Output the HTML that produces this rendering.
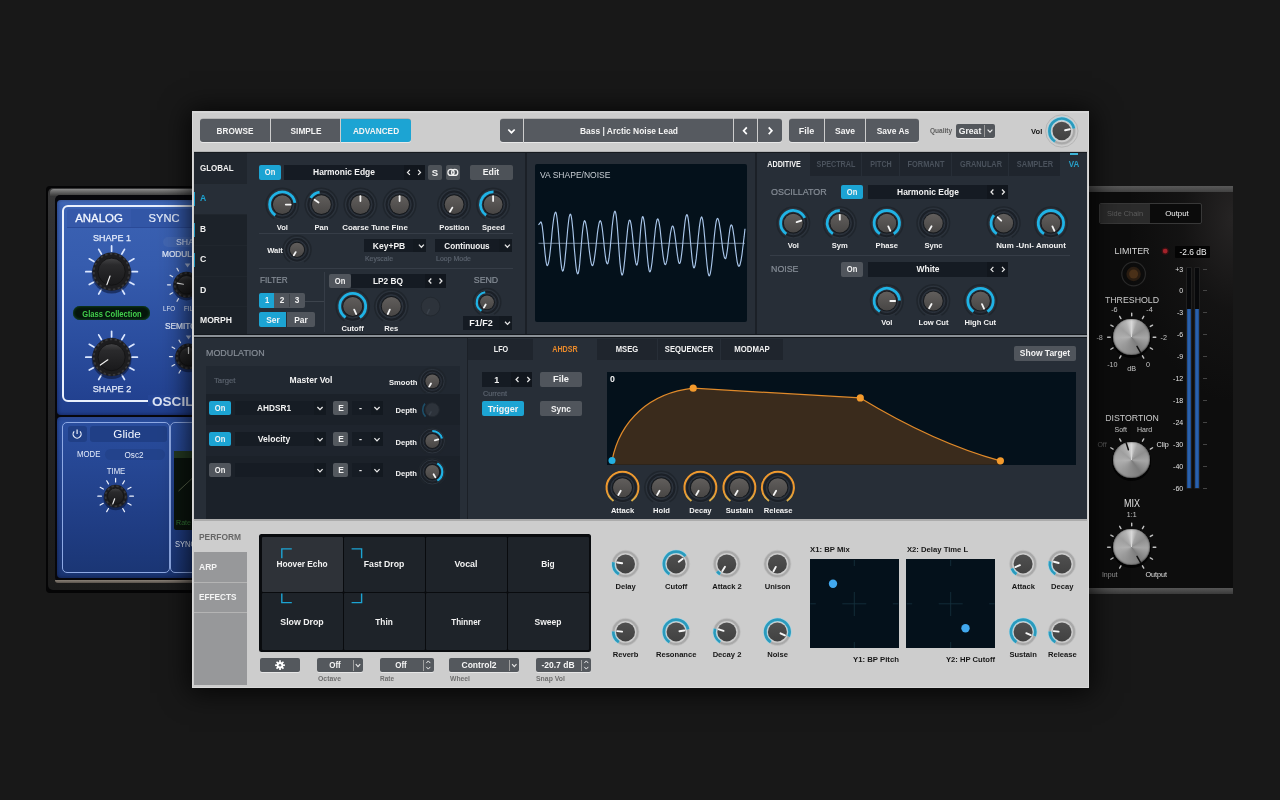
<!DOCTYPE html>
<html lang="en"><head><meta charset="utf-8"><title>Synth UI</title>
<style>
html,body{margin:0;padding:0;background:#181818;}
#app{position:relative;width:1280px;height:800px;overflow:hidden;background:#181818;font-family:"Liberation Sans",sans-serif;}
.b{position:absolute;box-sizing:border-box;}
.t{position:absolute;white-space:pre;line-height:1;display:block;}
div.tl{position:absolute;left:0;top:0;width:1280px;height:800px;will-change:transform;}
svg.ov{position:absolute;left:0;top:0;pointer-events:none;}
</style></head><body>
<div id="app">
<div class="b " style="left:45.5px;top:185.6px;width:152.0px;height:407.4px;background:#050506;border-radius:4px;"></div><div class="b " style="left:48.4px;top:188.2px;width:150.0px;height:401.6px;background:linear-gradient(180deg,#363637 0%,#313132 8%,#272728 45%,#1b1b1b 100%);border-radius:5px;"></div><div class="b " style="left:50.0px;top:188.8px;width:148.0px;height:7.0px;background:linear-gradient(180deg,#8a8a8a 0%,#707070 30%,#4c4c4c 75%,#3a3a3a 100%);border-radius:4px 0 0 0;"></div><div class="b " style="left:55.4px;top:195.4px;width:143.0px;height:387.0px;background:#07070b;border-radius:5px;"></div><div class="b " style="left:55.0px;top:580.4px;width:143.0px;height:2.6px;background:linear-gradient(180deg,#8a8178,#5a534c);border-radius:0 0 0 6px;"></div><div class="b " style="left:57.2px;top:200.0px;width:140.0px;height:214.8px;background:linear-gradient(180deg,#4a74c6 0%,#3b62b3 2.5%,#365cae 30%,#2b4e9f 65%,#203e8c 100%);border-radius:4px;box-shadow:inset 0 0 4px rgba(0,0,30,.5);"></div><div class="b " style="left:57.2px;top:417.0px;width:140.0px;height:161.2px;background:linear-gradient(180deg,#3a5cb0 0%,#2a4e9f 1.5%,#264794 30%,#1f3c82 70%,#1a3573 100%);border-radius:4px;box-shadow:inset 0 0 4px rgba(0,0,30,.5);"></div><div class="b " style="left:62.0px;top:204.8px;width:150.0px;height:197.6px;background:transparent;border-radius:6px;border:2px solid #eaf0fc;"></div><div class="b " style="left:148.0px;top:395.0px;width:50.0px;height:11.0px;background:#254596;"></div><div class="b " style="left:66.5px;top:208.6px;width:64.0px;height:18.0px;background:#3659aa;border-radius:3px 0 0 0;"></div><div class="b " style="left:131.2px;top:208.6px;width:66.0px;height:18.0px;background:#3256a6;"></div><div class="b " style="left:66.5px;top:226.6px;width:132.0px;height:0.8px;background:#2a4a98;"></div><div class="b " style="left:72.5px;top:306.2px;width:77.8px;height:13.8px;background:#05160c;border-radius:7px;box-shadow:inset 0 0 2.5px 0.5px #124a24;"></div><div class="b " style="left:163.0px;top:236.5px;width:40.0px;height:10.8px;background:#4266b2;border-radius:5.4px;"></div><div class="b " style="left:61.6px;top:421.6px;width:108.0px;height:151.4px;background:transparent;border-radius:5px;border:1.8px solid #8ea9e4;"></div><div class="b " style="left:170.2px;top:421.6px;width:60.0px;height:151.4px;background:transparent;border-radius:5px;border:1.8px solid #8ea9e4;"></div><div class="b " style="left:67.5px;top:425.8px;width:19.2px;height:16.6px;background:#203f86;border-radius:3px;"></div><div class="b " style="left:89.5px;top:425.8px;width:77.0px;height:16.6px;background:#203f86;border-radius:3px;"></div><div class="b " style="left:104.6px;top:449.0px;width:60.4px;height:11.0px;background:#23438c;border-radius:5.5px;"></div><div class="b " style="left:173.9px;top:451.4px;width:30.0px;height:78.4px;background:#0b150e;border-radius:2px;"></div><div class="b " style="left:173.9px;top:451.4px;width:30.0px;height:7.0px;background:#243a22;"></div><div class="b " style="left:1088.0px;top:186.0px;width:144.6px;height:408.0px;background:radial-gradient(ellipse 70% 45% at 100% 8%,rgba(38,36,36,1),rgba(24,23,23,.6) 50%,rgba(13,13,13,0) 100%),#0d0d0d;"></div><div class="b " style="left:1088.0px;top:186.4px;width:144.6px;height:5.4px;background:linear-gradient(180deg,#585858,#424242);"></div><div class="b " style="left:1088.0px;top:588.4px;width:144.6px;height:5.6px;background:linear-gradient(180deg,#565656,#3a3a3a);"></div><div class="b " style="left:1099.2px;top:202.5px;width:102.6px;height:21.6px;background:#0b0b0b;border-radius:2px;border:1px solid #383838;"></div><div class="b " style="left:1100.2px;top:203.5px;width:50.0px;height:19.6px;background:#2b2b2b;border-radius:1px 0 0 1px;"></div><div class="b " style="left:1174.8px;top:245.8px;width:35.2px;height:11.8px;background:#040404;border-radius:1px;"></div><div class="b " style="left:1112.4px;top:319.4px;width:38.6px;height:38.6px;background:#030303;border-radius:19.3px;"></div><div class="b " style="left:1113.4px;top:318.9px;width:36.6px;height:36.6px;background:conic-gradient(from 0deg,#d9d9d9 0%,#a4a4a4 6%,#8f8f8f 16%,#a6a6a6 26%,#7c7c7c 40%,#8a8a8a 50%,#9c9c9c 62%,#b2b2b2 74%,#a0a0a0 86%,#b4b4b4 94%,#d9d9d9 100%);border-radius:18.3px;box-shadow:inset 0 0 1.5px 0.5px rgba(0,0,0,.55), inset 0 1px 1px rgba(255,255,255,.35);"></div><div class="b " style="left:1112.4px;top:442.0px;width:38.6px;height:38.6px;background:#030303;border-radius:19.3px;"></div><div class="b " style="left:1113.4px;top:441.5px;width:36.6px;height:36.6px;background:conic-gradient(from 0deg,#d9d9d9 0%,#a4a4a4 6%,#8f8f8f 16%,#a6a6a6 26%,#7c7c7c 40%,#8a8a8a 50%,#9c9c9c 62%,#b2b2b2 74%,#a0a0a0 86%,#b4b4b4 94%,#d9d9d9 100%);border-radius:18.3px;box-shadow:inset 0 0 1.5px 0.5px rgba(0,0,0,.55), inset 0 1px 1px rgba(255,255,255,.35);"></div><div class="b " style="left:1112.4px;top:529.4px;width:38.6px;height:38.6px;background:#030303;border-radius:19.3px;"></div><div class="b " style="left:1113.4px;top:528.9px;width:36.6px;height:36.6px;background:conic-gradient(from 0deg,#d9d9d9 0%,#a4a4a4 6%,#8f8f8f 16%,#a6a6a6 26%,#7c7c7c 40%,#8a8a8a 50%,#9c9c9c 62%,#b2b2b2 74%,#a0a0a0 86%,#b4b4b4 94%,#d9d9d9 100%);border-radius:18.3px;box-shadow:inset 0 0 1.5px 0.5px rgba(0,0,0,.55), inset 0 1px 1px rgba(255,255,255,.35);"></div><div class="b " style="left:1203.4px;top:269.0px;width:3.6px;height:0.7px;background:#444;"></div><div class="b " style="left:1203.4px;top:290.3px;width:3.6px;height:0.7px;background:#444;"></div><div class="b " style="left:1203.4px;top:312.3px;width:3.6px;height:0.7px;background:#444;"></div><div class="b " style="left:1203.4px;top:334.2px;width:3.6px;height:0.7px;background:#444;"></div><div class="b " style="left:1203.4px;top:356.1px;width:3.6px;height:0.7px;background:#444;"></div><div class="b " style="left:1203.4px;top:378.1px;width:3.6px;height:0.7px;background:#444;"></div><div class="b " style="left:1203.4px;top:399.9px;width:3.6px;height:0.7px;background:#444;"></div><div class="b " style="left:1203.4px;top:421.9px;width:3.6px;height:0.7px;background:#444;"></div><div class="b " style="left:1203.4px;top:443.9px;width:3.6px;height:0.7px;background:#444;"></div><div class="b " style="left:1203.4px;top:465.9px;width:3.6px;height:0.7px;background:#444;"></div><div class="b " style="left:1203.4px;top:487.9px;width:3.6px;height:0.7px;background:#444;"></div><div class="b " style="left:1186.7px;top:268.4px;width:4.7px;height:220.0px;background:#08090b;box-shadow:0 0 0 0.6px #2a2a2a;"></div><div class="b " style="left:1186.7px;top:309.0px;width:4.7px;height:179.4px;background:linear-gradient(90deg,#1b4686,#2f6ab8 50%,#1b4686);"></div><div class="b " style="left:1194.7px;top:268.4px;width:4.7px;height:220.0px;background:#08090b;box-shadow:0 0 0 0.6px #2a2a2a;"></div><div class="b " style="left:1194.7px;top:309.0px;width:4.7px;height:179.4px;background:linear-gradient(90deg,#1b4686,#2f6ab8 50%,#1b4686);"></div>
<svg class="ov" width="1280" height="800" viewBox="0 0 1280 800"><defs>
<linearGradient id="kd" x1="0" y1="0" x2="0" y2="1"><stop offset="0" stop-color="#615e5c"/><stop offset="1" stop-color="#484645"/></linearGradient>
<linearGradient id="kl" x1="0" y1="0" x2="0" y2="1"><stop offset="0" stop-color="#505050"/><stop offset="1" stop-color="#414141"/></linearGradient>
<linearGradient id="kb" x1="0" y1="0" x2="0" y2="1"><stop offset="0" stop-color="#444446"/><stop offset="0.25" stop-color="#2a2a2c"/><stop offset="1" stop-color="#19191b"/></linearGradient>
<linearGradient id="ks" x1="0" y1="0" x2="1" y2="0"><stop offset="0" stop-color="#8c8c8c"/><stop offset="0.3" stop-color="#d8d8d8"/><stop offset="0.5" stop-color="#9a9a9a"/><stop offset="0.7" stop-color="#d0d0d0"/><stop offset="1" stop-color="#7a7a7a"/></linearGradient>
<linearGradient id="ksv" x1="0" y1="0" x2="0" y2="1"><stop offset="0" stop-color="#ffffff" stop-opacity="0.35"/><stop offset="0.5" stop-color="#ffffff" stop-opacity="0"/><stop offset="1" stop-color="#000000" stop-opacity="0.35"/></linearGradient>
<linearGradient id="blu" x1="0" y1="0" x2="0" y2="1"><stop offset="0" stop-color="#3560b8"/><stop offset="1" stop-color="#27489a"/></linearGradient>
<linearGradient id="mtr" x1="0" y1="0" x2="1" y2="0"><stop offset="0" stop-color="#1f4f93"/><stop offset="0.5" stop-color="#3f7fd6"/><stop offset="1" stop-color="#1f4f93"/></linearGradient>
<linearGradient id="org" gradientUnits="objectBoundingBox" x1="0" y1="0" x2="0" y2="1"><stop offset="0" stop-color="#f09a2e"/><stop offset="0.7" stop-color="#ec982f"/><stop offset="1" stop-color="#d8b04c"/></linearGradient>
</defs><line x1="101.40" y1="289.37" x2="98.70" y2="294.04" stroke="#dbe7ff" stroke-width="1.7" stroke-linecap="round"/><line x1="93.93" y1="281.90" x2="89.26" y2="284.60" stroke="#dbe7ff" stroke-width="1.7" stroke-linecap="round"/><line x1="91.20" y1="271.70" x2="85.80" y2="271.70" stroke="#dbe7ff" stroke-width="1.7" stroke-linecap="round"/><line x1="93.93" y1="261.50" x2="89.26" y2="258.80" stroke="#dbe7ff" stroke-width="1.7" stroke-linecap="round"/><line x1="101.40" y1="254.03" x2="98.70" y2="249.36" stroke="#dbe7ff" stroke-width="1.7" stroke-linecap="round"/><line x1="111.60" y1="251.30" x2="111.60" y2="245.90" stroke="#dbe7ff" stroke-width="1.7" stroke-linecap="round"/><line x1="121.80" y1="254.03" x2="124.50" y2="249.36" stroke="#dbe7ff" stroke-width="1.7" stroke-linecap="round"/><line x1="129.27" y1="261.50" x2="133.94" y2="258.80" stroke="#dbe7ff" stroke-width="1.7" stroke-linecap="round"/><line x1="132.00" y1="271.70" x2="137.40" y2="271.70" stroke="#dbe7ff" stroke-width="1.7" stroke-linecap="round"/><line x1="129.27" y1="281.90" x2="133.94" y2="284.60" stroke="#dbe7ff" stroke-width="1.7" stroke-linecap="round"/><line x1="121.80" y1="289.37" x2="124.50" y2="294.04" stroke="#dbe7ff" stroke-width="1.7" stroke-linecap="round"/><circle cx="111.6" cy="273.5" r="19.900000000000002" fill="#0a1330" opacity="0.55"/><circle cx="111.6" cy="271.7" r="19.1" fill="#1d1d1f"/><circle cx="111.6" cy="271.7" r="17.80" fill="none" stroke="#37373a" stroke-width="1.8" stroke-dasharray="2.4 2.4"/><circle cx="111.6" cy="271.7" r="13.56" fill="url(#kb)" stroke="#111113" stroke-width="0.8"/><line x1="110.03" y1="276.01" x2="106.90" y2="284.62" stroke="#f0f0f0" stroke-width="1.2" stroke-linecap="round"/><line x1="101.40" y1="374.87" x2="98.70" y2="379.54" stroke="#dbe7ff" stroke-width="1.7" stroke-linecap="round"/><line x1="93.93" y1="367.40" x2="89.26" y2="370.10" stroke="#dbe7ff" stroke-width="1.7" stroke-linecap="round"/><line x1="91.20" y1="357.20" x2="85.80" y2="357.20" stroke="#dbe7ff" stroke-width="1.7" stroke-linecap="round"/><line x1="93.93" y1="347.00" x2="89.26" y2="344.30" stroke="#dbe7ff" stroke-width="1.7" stroke-linecap="round"/><line x1="101.40" y1="339.53" x2="98.70" y2="334.86" stroke="#dbe7ff" stroke-width="1.7" stroke-linecap="round"/><line x1="111.60" y1="336.80" x2="111.60" y2="331.40" stroke="#dbe7ff" stroke-width="1.7" stroke-linecap="round"/><line x1="121.80" y1="339.53" x2="124.50" y2="334.86" stroke="#dbe7ff" stroke-width="1.7" stroke-linecap="round"/><line x1="129.27" y1="347.00" x2="133.94" y2="344.30" stroke="#dbe7ff" stroke-width="1.7" stroke-linecap="round"/><line x1="132.00" y1="357.20" x2="137.40" y2="357.20" stroke="#dbe7ff" stroke-width="1.7" stroke-linecap="round"/><line x1="129.27" y1="367.40" x2="133.94" y2="370.10" stroke="#dbe7ff" stroke-width="1.7" stroke-linecap="round"/><line x1="121.80" y1="374.87" x2="124.50" y2="379.54" stroke="#dbe7ff" stroke-width="1.7" stroke-linecap="round"/><circle cx="111.6" cy="359.0" r="19.900000000000002" fill="#0a1330" opacity="0.55"/><circle cx="111.6" cy="357.2" r="19.1" fill="#1d1d1f"/><circle cx="111.6" cy="357.2" r="17.80" fill="none" stroke="#37373a" stroke-width="1.8" stroke-dasharray="2.4 2.4"/><circle cx="111.6" cy="357.2" r="13.56" fill="url(#kb)" stroke="#111113" stroke-width="0.8"/><line x1="107.85" y1="359.83" x2="100.34" y2="365.09" stroke="#f0f0f0" stroke-width="1.2" stroke-linecap="round"/><path d="M184.8 263.6L190.4 263.6L187.6 267.6Z" fill="#a9b9dc"/><line x1="178.50" y1="298.66" x2="177.00" y2="301.25" stroke="#eef3ff" stroke-width="1.2" stroke-linecap="round"/><line x1="172.64" y1="292.80" x2="170.05" y2="294.30" stroke="#eef3ff" stroke-width="1.2" stroke-linecap="round"/><line x1="170.50" y1="284.80" x2="167.50" y2="284.80" stroke="#eef3ff" stroke-width="1.2" stroke-linecap="round"/><line x1="172.64" y1="276.80" x2="170.05" y2="275.30" stroke="#eef3ff" stroke-width="1.2" stroke-linecap="round"/><line x1="178.50" y1="270.94" x2="177.00" y2="268.35" stroke="#eef3ff" stroke-width="1.2" stroke-linecap="round"/><line x1="194.50" y1="270.94" x2="196.00" y2="268.35" stroke="#eef3ff" stroke-width="1.2" stroke-linecap="round"/><line x1="200.36" y1="276.80" x2="202.95" y2="275.30" stroke="#eef3ff" stroke-width="1.2" stroke-linecap="round"/><line x1="202.50" y1="284.80" x2="205.50" y2="284.80" stroke="#eef3ff" stroke-width="1.2" stroke-linecap="round"/><line x1="200.36" y1="292.80" x2="202.95" y2="294.30" stroke="#eef3ff" stroke-width="1.2" stroke-linecap="round"/><line x1="194.50" y1="298.66" x2="196.00" y2="301.25" stroke="#eef3ff" stroke-width="1.2" stroke-linecap="round"/><circle cx="186.5" cy="286.6" r="13.8" fill="#0a1330" opacity="0.55"/><circle cx="186.5" cy="284.8" r="13" fill="#1d1d1f"/><circle cx="186.5" cy="284.8" r="11.70" fill="none" stroke="#37373a" stroke-width="1.8" stroke-dasharray="2.4 2.4"/><circle cx="186.5" cy="284.8" r="9.23" fill="url(#kb)" stroke="#111113" stroke-width="0.8"/><line x1="183.43" y1="284.26" x2="177.28" y2="283.17" stroke="#f0f0f0" stroke-width="1.2" stroke-linecap="round"/><path d="M185.8 335.4L191.4 335.4L188.6 339.4Z" fill="#a9b9dc"/><line x1="180.50" y1="370.46" x2="179.00" y2="373.05" stroke="#eef3ff" stroke-width="1.2" stroke-linecap="round"/><line x1="174.64" y1="364.60" x2="172.05" y2="366.10" stroke="#eef3ff" stroke-width="1.2" stroke-linecap="round"/><line x1="172.50" y1="356.60" x2="169.50" y2="356.60" stroke="#eef3ff" stroke-width="1.2" stroke-linecap="round"/><line x1="174.64" y1="348.60" x2="172.05" y2="347.10" stroke="#eef3ff" stroke-width="1.2" stroke-linecap="round"/><line x1="180.50" y1="342.74" x2="179.00" y2="340.15" stroke="#eef3ff" stroke-width="1.2" stroke-linecap="round"/><line x1="196.50" y1="342.74" x2="198.00" y2="340.15" stroke="#eef3ff" stroke-width="1.2" stroke-linecap="round"/><line x1="202.36" y1="348.60" x2="204.95" y2="347.10" stroke="#eef3ff" stroke-width="1.2" stroke-linecap="round"/><line x1="204.50" y1="356.60" x2="207.50" y2="356.60" stroke="#eef3ff" stroke-width="1.2" stroke-linecap="round"/><line x1="202.36" y1="364.60" x2="204.95" y2="366.10" stroke="#eef3ff" stroke-width="1.2" stroke-linecap="round"/><line x1="196.50" y1="370.46" x2="198.00" y2="373.05" stroke="#eef3ff" stroke-width="1.2" stroke-linecap="round"/><circle cx="188.5" cy="358.40000000000003" r="13.8" fill="#0a1330" opacity="0.55"/><circle cx="188.5" cy="356.6" r="13" fill="#1d1d1f"/><circle cx="188.5" cy="356.6" r="11.70" fill="none" stroke="#37373a" stroke-width="1.8" stroke-dasharray="2.4 2.4"/><circle cx="188.5" cy="356.6" r="9.23" fill="url(#kb)" stroke="#111113" stroke-width="0.8"/><line x1="188.50" y1="353.48" x2="188.50" y2="347.24" stroke="#f0f0f0" stroke-width="1.2" stroke-linecap="round"/><path d="M74.2 431.3A4 4 0 1 0 80 431.3" fill="none" stroke="#eef3ff" stroke-width="1.2"/><line x1="77.1" y1="429.4" x2="77.1" y2="434" stroke="#eef3ff" stroke-width="1.2"/><line x1="108.50" y1="508.50" x2="106.70" y2="511.62" stroke="#eef3ff" stroke-width="1.2" stroke-linecap="round"/><line x1="103.30" y1="503.30" x2="100.18" y2="505.10" stroke="#eef3ff" stroke-width="1.2" stroke-linecap="round"/><line x1="101.40" y1="496.20" x2="97.80" y2="496.20" stroke="#eef3ff" stroke-width="1.2" stroke-linecap="round"/><line x1="103.30" y1="489.10" x2="100.18" y2="487.30" stroke="#eef3ff" stroke-width="1.2" stroke-linecap="round"/><line x1="108.50" y1="483.90" x2="106.70" y2="480.78" stroke="#eef3ff" stroke-width="1.2" stroke-linecap="round"/><line x1="115.60" y1="482.00" x2="115.60" y2="478.40" stroke="#eef3ff" stroke-width="1.2" stroke-linecap="round"/><line x1="122.70" y1="483.90" x2="124.50" y2="480.78" stroke="#eef3ff" stroke-width="1.2" stroke-linecap="round"/><line x1="127.90" y1="489.10" x2="131.02" y2="487.30" stroke="#eef3ff" stroke-width="1.2" stroke-linecap="round"/><line x1="129.80" y1="496.20" x2="133.40" y2="496.20" stroke="#eef3ff" stroke-width="1.2" stroke-linecap="round"/><line x1="127.90" y1="503.30" x2="131.02" y2="505.10" stroke="#eef3ff" stroke-width="1.2" stroke-linecap="round"/><line x1="122.70" y1="508.50" x2="124.50" y2="511.62" stroke="#eef3ff" stroke-width="1.2" stroke-linecap="round"/><circle cx="115.6" cy="498.0" r="12.200000000000001" fill="#0a1330" opacity="0.55"/><circle cx="115.6" cy="496.2" r="11.4" fill="#1d1d1f"/><circle cx="115.6" cy="496.2" r="10.10" fill="none" stroke="#37373a" stroke-width="1.8" stroke-dasharray="2.4 2.4"/><circle cx="115.6" cy="496.2" r="8.09" fill="url(#kb)" stroke="#111113" stroke-width="0.8"/><line x1="114.66" y1="498.77" x2="112.79" y2="503.91" stroke="#f0f0f0" stroke-width="1.2" stroke-linecap="round"/><path d="M178.5 491L192 478.5" stroke="#6d7a5a" stroke-width="0.8"/><circle cx="1165.2" cy="251.1" r="3.6" fill="#3a1012"/><circle cx="1165.2" cy="251.1" r="2.4" fill="#a3222a"/><circle cx="1133.6" cy="274" r="11.8" fill="#0c0c0c" stroke="#2a2a2a" stroke-width="1.2"/><circle cx="1133.6" cy="274" r="7.2" fill="#2a1d12"/><circle cx="1133.6" cy="274" r="4.5" fill="#4a3018"/><line x1="1120.95" y1="355.82" x2="1119.65" y2="358.07" stroke="#c4c4c4" stroke-width="1.4" stroke-linecap="round"/><line x1="1113.08" y1="347.95" x2="1110.83" y2="349.25" stroke="#c4c4c4" stroke-width="1.4" stroke-linecap="round"/><line x1="1110.20" y1="337.20" x2="1107.60" y2="337.20" stroke="#c4c4c4" stroke-width="1.4" stroke-linecap="round"/><line x1="1113.08" y1="326.45" x2="1110.83" y2="325.15" stroke="#c4c4c4" stroke-width="1.4" stroke-linecap="round"/><line x1="1120.95" y1="318.58" x2="1119.65" y2="316.33" stroke="#c4c4c4" stroke-width="1.4" stroke-linecap="round"/><line x1="1131.70" y1="315.70" x2="1131.70" y2="313.10" stroke="#c4c4c4" stroke-width="1.4" stroke-linecap="round"/><line x1="1142.45" y1="318.58" x2="1143.75" y2="316.33" stroke="#c4c4c4" stroke-width="1.4" stroke-linecap="round"/><line x1="1150.32" y1="326.45" x2="1152.57" y2="325.15" stroke="#c4c4c4" stroke-width="1.4" stroke-linecap="round"/><line x1="1153.20" y1="337.20" x2="1155.80" y2="337.20" stroke="#c4c4c4" stroke-width="1.4" stroke-linecap="round"/><line x1="1150.32" y1="347.95" x2="1152.57" y2="349.25" stroke="#c4c4c4" stroke-width="1.4" stroke-linecap="round"/><line x1="1142.45" y1="355.82" x2="1143.75" y2="358.07" stroke="#c4c4c4" stroke-width="1.4" stroke-linecap="round"/><line x1="1137.01" y1="346.39" x2="1140.67" y2="352.73" stroke="#101010" stroke-width="1.5" stroke-linecap="round"/><line x1="1113.08" y1="449.05" x2="1110.83" y2="447.75" stroke="#c4c4c4" stroke-width="1.4" stroke-linecap="round"/><line x1="1120.95" y1="441.18" x2="1119.65" y2="438.93" stroke="#c4c4c4" stroke-width="1.4" stroke-linecap="round"/><line x1="1142.45" y1="441.18" x2="1143.75" y2="438.93" stroke="#c4c4c4" stroke-width="1.4" stroke-linecap="round"/><line x1="1150.32" y1="449.05" x2="1152.57" y2="447.75" stroke="#c4c4c4" stroke-width="1.4" stroke-linecap="round"/><line x1="1128.42" y1="449.71" x2="1126.16" y2="442.74" stroke="#101010" stroke-width="1.5" stroke-linecap="round"/><line x1="1120.95" y1="565.82" x2="1119.65" y2="568.07" stroke="#c4c4c4" stroke-width="1.4" stroke-linecap="round"/><line x1="1113.08" y1="557.95" x2="1110.83" y2="559.25" stroke="#c4c4c4" stroke-width="1.4" stroke-linecap="round"/><line x1="1110.20" y1="547.20" x2="1107.60" y2="547.20" stroke="#c4c4c4" stroke-width="1.4" stroke-linecap="round"/><line x1="1113.08" y1="536.45" x2="1110.83" y2="535.15" stroke="#c4c4c4" stroke-width="1.4" stroke-linecap="round"/><line x1="1120.95" y1="528.58" x2="1119.65" y2="526.33" stroke="#c4c4c4" stroke-width="1.4" stroke-linecap="round"/><line x1="1131.70" y1="525.70" x2="1131.70" y2="523.10" stroke="#c4c4c4" stroke-width="1.4" stroke-linecap="round"/><line x1="1142.45" y1="528.58" x2="1143.75" y2="526.33" stroke="#c4c4c4" stroke-width="1.4" stroke-linecap="round"/><line x1="1150.32" y1="536.45" x2="1152.57" y2="535.15" stroke="#c4c4c4" stroke-width="1.4" stroke-linecap="round"/><line x1="1153.20" y1="547.20" x2="1155.80" y2="547.20" stroke="#c4c4c4" stroke-width="1.4" stroke-linecap="round"/><line x1="1150.32" y1="557.95" x2="1152.57" y2="559.25" stroke="#c4c4c4" stroke-width="1.4" stroke-linecap="round"/><line x1="1142.45" y1="565.82" x2="1143.75" y2="568.07" stroke="#c4c4c4" stroke-width="1.4" stroke-linecap="round"/><line x1="1137.01" y1="556.39" x2="1140.67" y2="562.73" stroke="#101010" stroke-width="1.5" stroke-linecap="round"/></svg>
<div class="tl"><span class="t" style="left:99.1px;top:212.58px;font-size:11.4px;color:#f2f6ff;transform:translateX(-50%) scaleX(1.004);transform-origin:50% 50%;-webkit-text-stroke:0.3px #f2f6ff;">ANALOG</span><span class="t" style="left:163.6px;top:212.58px;font-size:11.4px;color:#e6edfb;transform:translateX(-50%) scaleX(0.979);transform-origin:50% 50%;-webkit-text-stroke:0.2px #e6edfb;">SYNC</span><span class="t" style="left:112.0px;top:233.78px;font-size:9.3px;color:#e4ecfb;transform:translateX(-50%) scaleX(0.967);transform-origin:50% 50%;-webkit-text-stroke:0.25px #e4ecfb;">SHAPE 1</span><span class="t" style="left:112.0px;top:384.98px;font-size:9.3px;color:#e4ecfb;transform:translateX(-50%) scaleX(0.980);transform-origin:50% 50%;-webkit-text-stroke:0.25px #e4ecfb;">SHAPE 2</span><span class="t" style="left:151.5px;top:394.83px;font-size:13.2px;color:#dfe6f6;transform:scaleX(1.029);transform-origin:0 50%;font-weight:700;">OSCIL</span><span class="t" style="left:111.7px;top:309.72px;font-size:8.3px;color:#42d04c;transform:translateX(-50%) scaleX(0.913);transform-origin:50% 50%;font-weight:700;">Glass Collection</span><span class="t" style="left:175.8px;top:237.78px;font-size:8.6px;color:#d9e3f7;transform:scaleX(1.018);transform-origin:0 50%;">SHAPE</span><span class="t" style="left:162.4px;top:250.41px;font-size:8.4px;color:#e4ecfb;transform:scaleX(0.989);transform-origin:0 50%;-webkit-text-stroke:0.2px #e4ecfb;">MODULATION</span><span class="t" style="left:163.0px;top:304.68px;font-size:7.2px;color:#e4ecfb;transform:scaleX(0.857);transform-origin:0 50%;">LFO</span><span class="t" style="left:184.0px;top:304.68px;font-size:7.2px;color:#e4ecfb;transform:scaleX(0.865);transform-origin:0 50%;">FIL</span><span class="t" style="left:165.4px;top:322.41px;font-size:8.4px;color:#e4ecfb;transform:scaleX(0.993);transform-origin:0 50%;-webkit-text-stroke:0.2px #e4ecfb;">SEMITONES</span><span class="t" style="left:126.6px;top:428.78px;font-size:11.4px;color:#f2f6ff;transform:translateX(-50%) scaleX(1.033);transform-origin:50% 50%;">Glide</span><span class="t" style="left:77.1px;top:450.41px;font-size:8.4px;color:#e4ecfb;transform:scaleX(0.929);transform-origin:0 50%;">MODE</span><span class="t" style="left:134.3px;top:450.51px;font-size:8.4px;color:#e4ecfb;transform:translateX(-50%) scaleX(0.969);transform-origin:50% 50%;">Osc2</span><span class="t" style="left:116.2px;top:467.28px;font-size:8.6px;color:#e4ecfb;transform:translateX(-50%) scaleX(0.901);transform-origin:50% 50%;">TIME</span><span class="t" style="left:175.5px;top:519.36px;font-size:8px;color:#347a38;transform:scaleX(0.888);transform-origin:0 50%;">Rate</span><span class="t" style="left:174.7px;top:540.21px;font-size:8.4px;color:#e4ecfb;transform:scaleX(0.900);transform-origin:0 50%;">SYNC</span><span class="t" style="left:1125.4px;top:209.62px;font-size:7.6px;color:#5d5d5d;transform:translateX(-50%) scaleX(0.968);transform-origin:50% 50%;">Side Chain</span><span class="t" style="left:1176.6px;top:209.62px;font-size:7.6px;color:#f4f4f4;transform:translateX(-50%) scaleX(1.030);transform-origin:50% 50%;">Output</span><span class="t" style="left:1131.7px;top:246.88px;font-size:9.3px;color:#d8d8d8;transform:translateX(-50%) scaleX(0.951);transform-origin:50% 50%;">LIMITER</span><span class="t" style="left:1192.6px;top:247.58px;font-size:8.6px;color:#f0f0f0;transform:translateX(-50%) scaleX(0.974);transform-origin:50% 50%;">-2.6 dB</span><span class="t" style="left:1131.7px;top:295.78px;font-size:9.3px;color:#cfcfcf;transform:translateX(-50%) scaleX(0.945);transform-origin:50% 50%;">THRESHOLD</span><span class="t" style="left:1114.4px;top:306.28px;font-size:7.2px;color:#c8c8c8;transform:translateX(-50%) scaleX(1.000);transform-origin:50% 50%;">-6</span><span class="t" style="left:1149.5px;top:306.28px;font-size:7.2px;color:#c8c8c8;transform:translateX(-50%) scaleX(1.000);transform-origin:50% 50%;">-4</span><span class="t" style="left:1099.6px;top:333.78px;font-size:7.2px;color:#c8c8c8;transform:translateX(-50%) scaleX(1.000);transform-origin:50% 50%;">-8</span><span class="t" style="left:1163.8px;top:333.78px;font-size:7.2px;color:#c8c8c8;transform:translateX(-50%) scaleX(1.000);transform-origin:50% 50%;">-2</span><span class="t" style="left:1112.4px;top:361.28px;font-size:7.2px;color:#c8c8c8;transform:translateX(-50%) scaleX(1.000);transform-origin:50% 50%;">-10</span><span class="t" style="left:1148.0px;top:361.28px;font-size:7.2px;color:#c8c8c8;transform:translateX(-50%) scaleX(1.000);transform-origin:50% 50%;">0</span><span class="t" style="left:1131.7px;top:365.08px;font-size:7.2px;color:#c8c8c8;transform:translateX(-50%) scaleX(1.000);transform-origin:50% 50%;">dB</span><span class="t" style="left:1131.7px;top:413.68px;font-size:9.3px;color:#cfcfcf;transform:translateX(-50%) scaleX(0.940);transform-origin:50% 50%;">DISTORTION</span><span class="t" style="left:1120.7px;top:425.71px;font-size:7px;color:#c8c8c8;transform:translateX(-50%) scaleX(1.000);transform-origin:50% 50%;">Soft</span><span class="t" style="left:1144.6px;top:425.71px;font-size:7px;color:#c8c8c8;transform:translateX(-50%) scaleX(1.000);transform-origin:50% 50%;">Hard</span><span class="t" style="left:1102.0px;top:441.31px;font-size:7px;color:#5a5a5a;transform:translateX(-50%) scaleX(1.000);transform-origin:50% 50%;">Off</span><span class="t" style="left:1162.6px;top:441.28px;font-size:7.2px;color:#e8e8e8;transform:translateX(-50%) scaleX(1.000);transform-origin:50% 50%;">Clip</span><span class="t" style="left:1131.7px;top:499.18px;font-size:10px;color:#e0e0e0;transform:translateX(-50%) scaleX(0.900);transform-origin:50% 50%;">MIX</span><span class="t" style="left:1131.7px;top:510.91px;font-size:7px;color:#c8c8c8;transform:translateX(-50%) scaleX(1.000);transform-origin:50% 50%;">1:1</span><span class="t" style="left:1109.7px;top:570.71px;font-size:7px;color:#9a9a9a;transform:translateX(-50%) scaleX(1.000);transform-origin:50% 50%;">Input</span><span class="t" style="left:1156.2px;top:570.68px;font-size:7.2px;color:#e0e0e0;transform:translateX(-50%) scaleX(1.000);transform-origin:50% 50%;">Output</span><span class="t" style="left:1183.2px;top:265.81px;font-size:7px;color:#e0e0e0;transform:translateX(-100%) scaleX(1.000);transform-origin:100% 50%;">+3</span><span class="t" style="left:1183.2px;top:287.11px;font-size:7px;color:#e0e0e0;transform:translateX(-100%) scaleX(1.000);transform-origin:100% 50%;">0</span><span class="t" style="left:1183.2px;top:309.11px;font-size:7px;color:#e0e0e0;transform:translateX(-100%) scaleX(1.000);transform-origin:100% 50%;">-3</span><span class="t" style="left:1183.2px;top:331.01px;font-size:7px;color:#e0e0e0;transform:translateX(-100%) scaleX(1.000);transform-origin:100% 50%;">-6</span><span class="t" style="left:1183.2px;top:352.91px;font-size:7px;color:#e0e0e0;transform:translateX(-100%) scaleX(1.000);transform-origin:100% 50%;">-9</span><span class="t" style="left:1183.2px;top:374.91px;font-size:7px;color:#e0e0e0;transform:translateX(-100%) scaleX(1.000);transform-origin:100% 50%;">-12</span><span class="t" style="left:1183.2px;top:396.71px;font-size:7px;color:#e0e0e0;transform:translateX(-100%) scaleX(1.000);transform-origin:100% 50%;">-18</span><span class="t" style="left:1183.2px;top:418.71px;font-size:7px;color:#e0e0e0;transform:translateX(-100%) scaleX(1.000);transform-origin:100% 50%;">-24</span><span class="t" style="left:1183.2px;top:440.71px;font-size:7px;color:#e0e0e0;transform:translateX(-100%) scaleX(1.000);transform-origin:100% 50%;">-30</span><span class="t" style="left:1183.2px;top:462.71px;font-size:7px;color:#e0e0e0;transform:translateX(-100%) scaleX(1.000);transform-origin:100% 50%;">-40</span><span class="t" style="left:1183.2px;top:484.71px;font-size:7px;color:#e0e0e0;transform:translateX(-100%) scaleX(1.000);transform-origin:100% 50%;">-60</span></div>
<div class="b " style="left:192.0px;top:111.0px;width:897.0px;height:577.0px;background:#cdcdcd;border:1.6px solid #d9d9d9;border-top:none;box-shadow:0 2px 26px 3px rgba(0,0,0,.78);"></div><div class="b " style="left:192.0px;top:111.0px;width:897.0px;height:1.8px;background:#d6d6d6;"></div><div class="b " style="left:200.0px;top:119.0px;width:70.0px;height:23.0px;background:#565a60;border-radius:3px 0px 0px 3px;box-shadow:0 1px 0 rgba(255,255,255,.55),0 -0.5px 0 rgba(0,0,0,.25);"></div><div class="b " style="left:271.0px;top:119.0px;width:69.0px;height:23.0px;background:#565a60;border-radius:0px 0px 0px 0px;box-shadow:0 1px 0 rgba(255,255,255,.55),0 -0.5px 0 rgba(0,0,0,.25);"></div><div class="b " style="left:340.5px;top:119.0px;width:70.0px;height:23.0px;background:#1ca4d3;border-radius:0px 3px 3px 0px;box-shadow:0 1px 0 rgba(255,255,255,.55),0 -0.5px 0 rgba(0,0,0,.25);"></div><div class="b " style="left:500.0px;top:119.0px;width:22.5px;height:23.0px;background:#565a60;border-radius:3px 0px 0px 3px;box-shadow:0 1px 0 rgba(255,255,255,.55),0 -0.5px 0 rgba(0,0,0,.25);"></div><div class="b " style="left:524.0px;top:119.0px;width:209.0px;height:23.0px;background:#565a60;border-radius:0px 0px 0px 0px;box-shadow:0 1px 0 rgba(255,255,255,.55),0 -0.5px 0 rgba(0,0,0,.25);"></div><div class="b " style="left:734.0px;top:119.0px;width:23.3px;height:23.0px;background:#565a60;border-radius:0px 0px 0px 0px;box-shadow:0 1px 0 rgba(255,255,255,.55),0 -0.5px 0 rgba(0,0,0,.25);"></div><div class="b " style="left:758.0px;top:119.0px;width:23.5px;height:23.0px;background:#565a60;border-radius:0px 3px 3px 0px;box-shadow:0 1px 0 rgba(255,255,255,.55),0 -0.5px 0 rgba(0,0,0,.25);"></div><div class="b " style="left:789.0px;top:119.0px;width:34.8px;height:23.0px;background:#565a60;border-radius:3px 0px 0px 3px;box-shadow:0 1px 0 rgba(255,255,255,.55),0 -0.5px 0 rgba(0,0,0,.25);"></div><div class="b " style="left:824.6px;top:119.0px;width:40.6px;height:23.0px;background:#565a60;border-radius:0px 0px 0px 0px;box-shadow:0 1px 0 rgba(255,255,255,.55),0 -0.5px 0 rgba(0,0,0,.25);"></div><div class="b " style="left:866.0px;top:119.0px;width:53.0px;height:23.0px;background:#565a60;border-radius:0px 3px 3px 0px;box-shadow:0 1px 0 rgba(255,255,255,.55),0 -0.5px 0 rgba(0,0,0,.25);"></div><div class="b " style="left:956.0px;top:123.6px;width:39.0px;height:14.6px;background:#53575c;border-radius:2px;box-shadow:0 1px 0 rgba(255,255,255,.5);"></div><div class="b " style="left:984.0px;top:125.2px;width:0.8px;height:11.4px;background:#9a9a9a;"></div><div class="b " style="left:193.6px;top:151.8px;width:893.4px;height:182.8px;background:#272e37;"></div><div class="b " style="left:193.6px;top:151.6px;width:893.4px;height:1.3px;background:#171b20;"></div><div class="b " style="left:193.6px;top:150.8px;width:893.4px;height:0.9px;background:#b4b5b6;"></div><div class="b " style="left:193.6px;top:152.9px;width:53.6px;height:181.6px;background:#1c2229;"></div><div class="b " style="left:193.6px;top:152.9px;width:53.6px;height:30.0px;background:#20262e;"></div><div class="b " style="left:193.6px;top:183.0px;width:53.6px;height:31.3px;background:#272e37;"></div><div class="b " style="left:193.6px;top:183.0px;width:53.6px;height:0.8px;background:#20262d;"></div><div class="b " style="left:193.6px;top:214.3px;width:53.6px;height:0.8px;background:#20262d;"></div><div class="b " style="left:193.6px;top:245.0px;width:53.6px;height:0.8px;background:#20262d;"></div><div class="b " style="left:193.6px;top:275.6px;width:53.6px;height:0.8px;background:#20262d;"></div><div class="b " style="left:193.6px;top:306.0px;width:53.6px;height:0.8px;background:#20262d;"></div><div class="b " style="left:193.8px;top:192.0px;width:1.6px;height:14.0px;background:#1ca4d3;"></div><div class="b " style="left:193.8px;top:222.5px;width:1.6px;height:14.0px;background:#1d93bd;"></div><div class="b " style="left:193.8px;top:253.0px;width:1.6px;height:14.0px;background:#1d93bd;"></div><div class="b " style="left:525.0px;top:152.6px;width:1.6px;height:182.0px;background:#1b2027;"></div><div class="b " style="left:755.0px;top:152.6px;width:2.2px;height:182.0px;background:#1b2027;"></div><div class="b " style="left:259.0px;top:164.6px;width:22.3px;height:15.2px;background:#1ca4d3;border-radius:2px 2px 2px 2px;"></div><div class="b " style="left:283.5px;top:165.0px;width:141.0px;height:14.6px;background:#151b23;"></div><div class="b " style="left:403.5px;top:165.0px;width:21.0px;height:14.6px;background:#11161d;"></div><div class="b " style="left:428.0px;top:165.0px;width:14.0px;height:14.6px;background:#4d5258;border-radius:2px;"></div><div class="b " style="left:445.5px;top:165.0px;width:14.6px;height:14.6px;background:#4d5258;border-radius:2px;"></div><div class="b " style="left:470.0px;top:165.0px;width:42.6px;height:14.6px;background:#4d5258;border-radius:2px;"></div><div class="b " style="left:259.0px;top:232.7px;width:253.5px;height:0.8px;background:#363d47;"></div><div class="b " style="left:364.3px;top:239.2px;width:62.0px;height:13.2px;background:#151b23;"></div><div class="b " style="left:413.3px;top:239.2px;width:13.0px;height:13.2px;background:#131920;"></div><div class="b " style="left:435.0px;top:239.2px;width:77.3px;height:13.2px;background:#151b23;"></div><div class="b " style="left:499.3px;top:239.2px;width:13.0px;height:13.2px;background:#131920;"></div><div class="b " style="left:259.0px;top:268.0px;width:253.5px;height:0.8px;background:#363d47;"></div><div class="b " style="left:258.9px;top:292.9px;width:15.3px;height:15.1px;background:#1ca4d3;border-radius:2px 0px 0px 2px;"></div><div class="b " style="left:274.2px;top:292.9px;width:15.2px;height:15.1px;background:#50555c;border-radius:0px 0px 0px 0px;"></div><div class="b " style="left:289.4px;top:292.9px;width:15.8px;height:15.1px;background:#50555c;border-radius:0px 2px 2px 0px;"></div><div class="b " style="left:289.3px;top:293.5px;width:0.7px;height:13.9px;background:#3e4349;"></div><div class="b " style="left:305.0px;top:300.6px;width:19.5px;height:0.8px;background:#3d444d;"></div><div class="b " style="left:258.9px;top:312.3px;width:27.6px;height:15.1px;background:#1ca4d3;border-radius:2px 0px 0px 2px;"></div><div class="b " style="left:286.5px;top:312.3px;width:28.1px;height:15.1px;background:#50555c;border-radius:0px 2px 2px 0px;"></div><div class="b " style="left:324.2px;top:271.5px;width:0.8px;height:60.0px;background:#363d47;"></div><div class="b " style="left:329.3px;top:273.8px;width:21.7px;height:14.4px;background:#50555c;border-radius:2px 2px 2px 2px;"></div><div class="b " style="left:351.4px;top:273.8px;width:94.0px;height:14.4px;background:#151b23;"></div><div class="b " style="left:424.5px;top:273.8px;width:21.0px;height:14.4px;background:#11161d;"></div><div class="b " style="left:463.4px;top:316.4px;width:49.0px;height:13.2px;background:#151b23;"></div><div class="b " style="left:499.4px;top:316.4px;width:13.0px;height:13.2px;background:#131920;"></div><div class="b " style="left:535.0px;top:164.3px;width:212.3px;height:158.0px;background:#04111b;border-radius:2px;"></div><div class="b " style="left:809.8px;top:152.9px;width:51.2px;height:22.8px;background:#1f252d;"></div><div class="b " style="left:862.0px;top:152.9px;width:36.8px;height:22.8px;background:#1f252d;"></div><div class="b " style="left:899.8px;top:152.9px;width:51.5px;height:22.8px;background:#1f252d;"></div><div class="b " style="left:952.3px;top:152.9px;width:55.5px;height:22.8px;background:#1f252d;"></div><div class="b " style="left:1008.8px;top:152.9px;width:51.2px;height:22.8px;background:#1f252d;"></div><div class="b " style="left:1070.4px;top:153.0px;width:7.8px;height:1.8px;background:#3db4d8;"></div><div class="b " style="left:840.8px;top:184.6px;width:22.2px;height:14.6px;background:#1ca4d3;border-radius:2px 2px 2px 2px;"></div><div class="b " style="left:867.7px;top:184.6px;width:140.0px;height:14.6px;background:#151b23;"></div><div class="b " style="left:986.5px;top:184.6px;width:21.2px;height:14.6px;background:#11161d;"></div><div class="b " style="left:770.0px;top:255.0px;width:300.0px;height:0.8px;background:#363d47;"></div><div class="b " style="left:840.8px;top:262.2px;width:22.2px;height:14.4px;background:#50555c;border-radius:2px 2px 2px 2px;"></div><div class="b " style="left:867.7px;top:262.2px;width:140.0px;height:14.4px;background:#151b23;"></div><div class="b " style="left:986.5px;top:262.2px;width:21.2px;height:14.4px;background:#11161d;"></div><div class="b " style="left:193.6px;top:334.2px;width:893.4px;height:4.0px;background:#14181d;"></div><div class="b " style="left:193.6px;top:335.2px;width:893.4px;height:1.5px;background:#8b9197;"></div><div class="b " style="left:193.6px;top:338.0px;width:893.4px;height:181.0px;background:#272e37;"></div><div class="b " style="left:466.8px;top:338.0px;width:1.6px;height:181.0px;background:#1b2027;"></div><div class="b " style="left:206.2px;top:366.0px;width:253.4px;height:153.0px;background:#1b2129;"></div><div class="b " style="left:206.2px;top:366.0px;width:253.4px;height:28.0px;background:#212831;"></div><div class="b " style="left:206.2px;top:425.0px;width:253.4px;height:31.0px;background:#1e242d;"></div><div class="b " style="left:209.0px;top:400.7px;width:22.0px;height:14.6px;background:#1ca4d3;border-radius:2px 2px 2px 2px;"></div><div class="b " style="left:234.7px;top:400.7px;width:91.0px;height:14.6px;background:#161c24;"></div><div class="b " style="left:313.5px;top:400.7px;width:12.2px;height:14.6px;background:#131920;"></div><div class="b " style="left:333.2px;top:400.7px;width:14.8px;height:14.6px;background:#54595f;border-radius:2px;"></div><div class="b " style="left:351.5px;top:400.7px;width:31.0px;height:14.6px;background:#161c24;"></div><div class="b " style="left:370.6px;top:400.7px;width:12.0px;height:14.6px;background:#131920;"></div><div class="b " style="left:209.0px;top:431.9px;width:22.0px;height:14.6px;background:#1ca4d3;border-radius:2px 2px 2px 2px;"></div><div class="b " style="left:234.7px;top:431.9px;width:91.0px;height:14.6px;background:#161c24;"></div><div class="b " style="left:313.5px;top:431.9px;width:12.2px;height:14.6px;background:#131920;"></div><div class="b " style="left:333.2px;top:431.9px;width:14.8px;height:14.6px;background:#54595f;border-radius:2px;"></div><div class="b " style="left:351.5px;top:431.9px;width:31.0px;height:14.6px;background:#161c24;"></div><div class="b " style="left:370.6px;top:431.9px;width:12.0px;height:14.6px;background:#131920;"></div><div class="b " style="left:209.0px;top:462.9px;width:22.0px;height:14.6px;background:#50555c;border-radius:2px 2px 2px 2px;"></div><div class="b " style="left:234.7px;top:462.9px;width:91.0px;height:14.6px;background:#161c24;"></div><div class="b " style="left:313.5px;top:462.9px;width:12.2px;height:14.6px;background:#131920;"></div><div class="b " style="left:333.2px;top:462.9px;width:14.8px;height:14.6px;background:#54595f;border-radius:2px;"></div><div class="b " style="left:351.5px;top:462.9px;width:31.0px;height:14.6px;background:#161c24;"></div><div class="b " style="left:370.6px;top:462.9px;width:12.0px;height:14.6px;background:#131920;"></div><div class="b " style="left:468.4px;top:338.6px;width:64.6px;height:21.3px;background:#1f252d;"></div><div class="b " style="left:597.0px;top:338.6px;width:59.6px;height:21.3px;background:#1f252d;"></div><div class="b " style="left:657.8px;top:338.6px;width:62.2px;height:21.3px;background:#1f252d;"></div><div class="b " style="left:721.2px;top:338.6px;width:62.3px;height:21.3px;background:#1f252d;"></div><div class="b " style="left:482.0px;top:372.2px;width:50.3px;height:14.6px;background:#151b23;"></div><div class="b " style="left:511.0px;top:372.2px;width:21.3px;height:14.6px;background:#11161d;"></div><div class="b " style="left:540.2px;top:372.2px;width:42.0px;height:14.6px;background:#50555c;border-radius:2px;"></div><div class="b " style="left:482.0px;top:401.4px;width:42.4px;height:14.6px;background:#1ca4d3;border-radius:2px;"></div><div class="b " style="left:540.2px;top:401.4px;width:42.0px;height:14.6px;background:#50555c;border-radius:2px;"></div><div class="b " style="left:1013.7px;top:346.2px;width:62.2px;height:14.4px;background:#50555c;border-radius:2px;"></div><div class="b " style="left:606.9px;top:372.3px;width:469.0px;height:92.4px;background:#04111b;"></div><div class="b " style="left:193.6px;top:519.0px;width:893.4px;height:1.7px;background:#acacac;"></div><div class="b " style="left:193.8px;top:552.0px;width:53.4px;height:133.4px;background:#97989a;"></div><div class="b " style="left:193.8px;top:582.0px;width:53.4px;height:0.8px;background:#b4b4b4;"></div><div class="b " style="left:193.8px;top:612.0px;width:53.4px;height:0.8px;background:#b4b4b4;"></div><div class="b " style="left:259.2px;top:534.2px;width:332.2px;height:117.6px;background:#090b0e;border-radius:2.5px;"></div><div class="b " style="left:262.0px;top:537.0px;width:81.2px;height:54.6px;background:#2e3238;border-radius:1px;"></div><div class="b " style="left:344.4px;top:537.0px;width:80.8px;height:54.6px;background:#1e2329;border-radius:1px;"></div><div class="b " style="left:426.4px;top:537.0px;width:80.4px;height:54.6px;background:#1e2329;border-radius:1px;"></div><div class="b " style="left:508.0px;top:537.0px;width:81.0px;height:54.6px;background:#1e2329;border-radius:1px;"></div><div class="b " style="left:262.0px;top:593.2px;width:81.2px;height:56.4px;background:#1e2329;border-radius:1px;"></div><div class="b " style="left:344.4px;top:593.2px;width:80.8px;height:56.4px;background:#1e2329;border-radius:1px;"></div><div class="b " style="left:426.4px;top:593.2px;width:80.4px;height:56.4px;background:#1e2329;border-radius:1px;"></div><div class="b " style="left:508.0px;top:593.2px;width:81.0px;height:56.4px;background:#1e2329;border-radius:1px;"></div><div class="b " style="left:259.8px;top:658.0px;width:40.6px;height:14.2px;background:#54585d;border-radius:2px;box-shadow:0 1px 0 rgba(255,255,255,.5);"></div><div class="b " style="left:317.2px;top:658.0px;width:46.2px;height:14.2px;background:#54585d;border-radius:2px;box-shadow:0 1px 0 rgba(255,255,255,.5);"></div><div class="b " style="left:352.6px;top:659.6px;width:0.8px;height:11.0px;background:#a0a0a0;"></div><div class="b " style="left:379.6px;top:658.0px;width:54.2px;height:14.2px;background:#54585d;border-radius:2px;box-shadow:0 1px 0 rgba(255,255,255,.5);"></div><div class="b " style="left:422.6px;top:659.6px;width:0.8px;height:11.0px;background:#a0a0a0;"></div><div class="b " style="left:449.4px;top:658.0px;width:70.0px;height:14.2px;background:#54585d;border-radius:2px;box-shadow:0 1px 0 rgba(255,255,255,.5);"></div><div class="b " style="left:509.0px;top:659.6px;width:0.8px;height:11.0px;background:#a0a0a0;"></div><div class="b " style="left:535.5px;top:658.0px;width:55.7px;height:14.2px;background:#54585d;border-radius:2px;box-shadow:0 1px 0 rgba(255,255,255,.5);"></div><div class="b " style="left:581.0px;top:659.6px;width:0.8px;height:11.0px;background:#a0a0a0;"></div><div class="b " style="left:809.8px;top:559.4px;width:88.9px;height:88.8px;background:#04111b;"></div><div class="b " style="left:906.2px;top:559.4px;width:89.0px;height:88.8px;background:#04111b;"></div>
<svg class="ov" width="1280" height="800" viewBox="0 0 1280 800"><path d="M508.30 129.50L511.50 132.70L514.70 129.50" fill="none" stroke="#ffffff" stroke-width="1.7"/><path d="M746.80 127.40L743.60 130.80L746.80 134.20" fill="none" stroke="#fff" stroke-width="1.7"/><path d="M768.70 127.40L771.90 130.80L768.70 134.20" fill="none" stroke="#fff" stroke-width="1.7"/><path d="M987.60 129.60L990.00 132.20L992.40 129.60" fill="none" stroke="#f0f0f0" stroke-width="1.1"/><circle cx="1061.8" cy="131" r="16.2" fill="none" stroke="#b2b2b2" stroke-width="0.9"/><circle cx="1061.8" cy="131" r="12.4" fill="none" stroke="#a9a9a9" stroke-width="2.5"/><circle cx="1061.8" cy="131" r="13.9" fill="none" stroke="#c0c0c0" stroke-width="0.7"/><path d="M1055.05 141.40A12.4 12.4 0 1 1 1073.93 128.42" fill="none" stroke="#9fd9ec" stroke-width="3.8"/><path d="M1055.05 141.40A12.4 12.4 0 1 1 1073.93 128.42" fill="none" stroke="#2a9abc" stroke-width="2.7"/><circle cx="1061.8" cy="131" r="9.3" fill="url(#kl)"/><line x1="1065.07" y1="130.30" x2="1069.81" y2="129.30" stroke="#f6f6f6" stroke-width="1.9" stroke-linecap="round"/><path d="M409.90 169.90L407.50 172.40L409.90 174.90" fill="none" stroke="#e8e8e8" stroke-width="1.25"/><path d="M418.10 169.90L420.50 172.40L418.10 174.90" fill="none" stroke="#e8e8e8" stroke-width="1.25"/><circle cx="451" cy="172.4" r="3.1" fill="none" stroke="#f0f0f0" stroke-width="1.25"/><circle cx="454.7" cy="172.4" r="3.1" fill="none" stroke="#f0f0f0" stroke-width="1.25"/><path d="M274.15 218.72A16.3 16.3 0 1 1 290.45 218.72" fill="none" stroke="#1f252c" stroke-width="1.4"/><circle cx="282.3" cy="204.6" r="14.7" fill="none" stroke="#2e353e" stroke-width="1"/><circle cx="282.3" cy="204.6" r="12.7" fill="none" stroke="#1b2027" stroke-width="2.6"/><circle cx="282.3" cy="204.6" r="11.6" fill="none" stroke="#2f363f" stroke-width="0.9"/><path d="M275.38 215.25A12.7 12.7 0 1 1 294.88 202.83" fill="none" stroke="#20b3e5" stroke-width="2.8"/><circle cx="282.3" cy="204.6" r="10.299999999999999" fill="#14171b"/><circle cx="282.3" cy="204.6" r="9.399999999999999" fill="url(#kd)"/><line x1="285.79" y1="204.60" x2="290.64" y2="204.60" stroke="#f4f4f4" stroke-width="1.8" stroke-linecap="round"/><path d="M313.25 218.72A16.3 16.3 0 1 1 329.55 218.72" fill="none" stroke="#1f252c" stroke-width="1.4"/><circle cx="321.4" cy="204.6" r="14.7" fill="none" stroke="#2e353e" stroke-width="1"/><circle cx="321.4" cy="204.6" r="12.7" fill="none" stroke="#1b2027" stroke-width="2.6"/><circle cx="321.4" cy="204.6" r="11.6" fill="none" stroke="#2f363f" stroke-width="0.9"/><path d="M310.63 197.87A12.7 12.7 0 0 1 319.63 192.02" fill="none" stroke="#20b3e5" stroke-width="2.8"/><circle cx="321.4" cy="204.6" r="10.299999999999999" fill="#14171b"/><circle cx="321.4" cy="204.6" r="9.399999999999999" fill="url(#kd)"/><line x1="318.54" y1="202.60" x2="314.57" y2="199.82" stroke="#f4f4f4" stroke-width="1.8" stroke-linecap="round"/><path d="M352.25 218.72A16.3 16.3 0 1 1 368.55 218.72" fill="none" stroke="#1f252c" stroke-width="1.4"/><circle cx="360.4" cy="204.6" r="14.7" fill="none" stroke="#2e353e" stroke-width="1"/><circle cx="360.4" cy="204.6" r="12.7" fill="none" stroke="#1b2027" stroke-width="2.6"/><circle cx="360.4" cy="204.6" r="11.6" fill="none" stroke="#2f363f" stroke-width="0.9"/><circle cx="360.4" cy="204.6" r="10.299999999999999" fill="#14171b"/><circle cx="360.4" cy="204.6" r="9.399999999999999" fill="url(#kd)"/><line x1="360.40" y1="201.11" x2="360.40" y2="196.26" stroke="#f4f4f4" stroke-width="1.8" stroke-linecap="round"/><path d="M391.45 218.72A16.3 16.3 0 1 1 407.75 218.72" fill="none" stroke="#1f252c" stroke-width="1.4"/><circle cx="399.6" cy="204.6" r="14.7" fill="none" stroke="#2e353e" stroke-width="1"/><circle cx="399.6" cy="204.6" r="12.7" fill="none" stroke="#1b2027" stroke-width="2.6"/><circle cx="399.6" cy="204.6" r="11.6" fill="none" stroke="#2f363f" stroke-width="0.9"/><circle cx="399.6" cy="204.6" r="10.299999999999999" fill="#14171b"/><circle cx="399.6" cy="204.6" r="9.399999999999999" fill="url(#kd)"/><line x1="399.60" y1="201.11" x2="399.60" y2="196.26" stroke="#f4f4f4" stroke-width="1.8" stroke-linecap="round"/><path d="M445.95 218.72A16.3 16.3 0 1 1 462.25 218.72" fill="none" stroke="#1f252c" stroke-width="1.4"/><circle cx="454.1" cy="204.6" r="14.7" fill="none" stroke="#2e353e" stroke-width="1"/><circle cx="454.1" cy="204.6" r="12.7" fill="none" stroke="#1b2027" stroke-width="2.6"/><circle cx="454.1" cy="204.6" r="11.6" fill="none" stroke="#2f363f" stroke-width="0.9"/><circle cx="454.1" cy="204.6" r="10.299999999999999" fill="#14171b"/><circle cx="454.1" cy="204.6" r="9.399999999999999" fill="url(#kd)"/><line x1="452.35" y1="207.62" x2="449.93" y2="211.82" stroke="#f4f4f4" stroke-width="1.8" stroke-linecap="round"/><path d="M484.95 218.72A16.3 16.3 0 1 1 501.25 218.72" fill="none" stroke="#1f252c" stroke-width="1.4"/><circle cx="493.1" cy="204.6" r="14.7" fill="none" stroke="#2e353e" stroke-width="1"/><circle cx="493.1" cy="204.6" r="12.7" fill="none" stroke="#1b2027" stroke-width="2.6"/><circle cx="493.1" cy="204.6" r="11.6" fill="none" stroke="#2f363f" stroke-width="0.9"/><path d="M486.18 215.25A12.7 12.7 0 0 1 493.54 191.91" fill="none" stroke="#20b3e5" stroke-width="2.8"/><circle cx="493.1" cy="204.6" r="10.299999999999999" fill="#14171b"/><circle cx="493.1" cy="204.6" r="9.399999999999999" fill="url(#kd)"/><line x1="493.10" y1="201.11" x2="493.10" y2="196.26" stroke="#f4f4f4" stroke-width="1.8" stroke-linecap="round"/><path d="M290.00 261.92A14.0 14.0 0 1 1 304.00 261.92" fill="none" stroke="#1f252c" stroke-width="1.4"/><circle cx="297" cy="249.8" r="12.4" fill="none" stroke="#2e353e" stroke-width="1"/><circle cx="297" cy="249.8" r="10.4" fill="none" stroke="#1b2027" stroke-width="2.6"/><circle cx="297" cy="249.8" r="9.3" fill="none" stroke="#2f363f" stroke-width="0.9"/><circle cx="297" cy="249.8" r="8.0" fill="#14171b"/><circle cx="297" cy="249.8" r="7.1000000000000005" fill="url(#kd)"/><line x1="295.67" y1="252.11" x2="293.82" y2="255.31" stroke="#f4f4f4" stroke-width="1.8" stroke-linecap="round"/><path d="M418.90 244.55L421.40 247.25L423.90 244.55" fill="none" stroke="#e8e8e8" stroke-width="1.25"/><path d="M504.90 244.55L507.40 247.25L509.90 244.55" fill="none" stroke="#e8e8e8" stroke-width="1.25"/><path d="M431.30 278.50L428.90 281.00L431.30 283.50" fill="none" stroke="#e8e8e8" stroke-width="1.25"/><path d="M439.50 278.50L441.90 281.00L439.50 283.50" fill="none" stroke="#e8e8e8" stroke-width="1.25"/><path d="M344.40 320.78A16.6 16.6 0 1 1 361.00 320.78" fill="none" stroke="#1f252c" stroke-width="1.4"/><circle cx="352.7" cy="306.4" r="15.0" fill="none" stroke="#2e353e" stroke-width="1"/><circle cx="352.7" cy="306.4" r="13" fill="none" stroke="#1b2027" stroke-width="2.6"/><circle cx="352.7" cy="306.4" r="11.700000000000001" fill="none" stroke="#2f363f" stroke-width="0.9"/><path d="M345.62 317.30A13 13 0 1 1 359.78 317.30" fill="none" stroke="#20b3e5" stroke-width="2.8"/><circle cx="352.7" cy="306.4" r="10.4" fill="#14171b"/><circle cx="352.7" cy="306.4" r="9.5" fill="url(#kd)"/><line x1="354.19" y1="309.60" x2="356.26" y2="314.04" stroke="#f4f4f4" stroke-width="1.8" stroke-linecap="round"/><path d="M383.00 320.78A16.6 16.6 0 1 1 399.60 320.78" fill="none" stroke="#1f252c" stroke-width="1.4"/><circle cx="391.3" cy="306.4" r="15.0" fill="none" stroke="#2e353e" stroke-width="1"/><circle cx="391.3" cy="306.4" r="13" fill="none" stroke="#1b2027" stroke-width="2.6"/><circle cx="391.3" cy="306.4" r="11.700000000000001" fill="none" stroke="#2f363f" stroke-width="0.9"/><circle cx="391.3" cy="306.4" r="10.4" fill="#14171b"/><circle cx="391.3" cy="306.4" r="9.5" fill="url(#kd)"/><line x1="389.81" y1="309.60" x2="387.74" y2="314.04" stroke="#f4f4f4" stroke-width="1.8" stroke-linecap="round"/><circle cx="430.6" cy="306.6" r="9.4" fill="#2d333b" stroke="#232930" stroke-width="1"/><line x1="429.21" y1="309.58" x2="427.42" y2="313.42" stroke="#3b424b" stroke-width="1.6" stroke-linecap="round"/><path d="M480.10 314.25A13.799999999999999 13.799999999999999 0 1 1 493.90 314.25" fill="none" stroke="#1f252c" stroke-width="1.4"/><circle cx="487" cy="302.3" r="12.2" fill="none" stroke="#2e353e" stroke-width="1"/><circle cx="487" cy="302.3" r="10.2" fill="none" stroke="#1b2027" stroke-width="2.6"/><circle cx="487" cy="302.3" r="9.1" fill="none" stroke="#2f363f" stroke-width="0.9"/><path d="M481.44 310.85A10.2 10.2 0 0 1 485.23 292.25" fill="none" stroke="#20b3e5" stroke-width="2.2"/><circle cx="487" cy="302.3" r="7.8" fill="#14171b"/><circle cx="487" cy="302.3" r="6.9" fill="url(#kd)"/><line x1="485.70" y1="304.54" x2="483.90" y2="307.66" stroke="#f4f4f4" stroke-width="1.8" stroke-linecap="round"/><path d="M505.00 321.75L507.50 324.45L510.00 321.75" fill="none" stroke="#e8e8e8" stroke-width="1.25"/><line x1="538.5" y1="243.3" x2="745" y2="243.3" stroke="#9fb0c4" stroke-width="0.7"/><path d="M538.5 224.8L540.9 221.9L541.3 222.5L541.8 224.1L542.3 226.7L542.7 230.2L543.2 234.3L543.6 238.9L544.1 243.8L544.6 248.6L545.0 253.2L545.5 257.4L545.9 260.8L546.4 263.4L546.8 265.1L547.3 265.6L547.9 264.9L548.5 263.0L549.1 259.8L549.7 255.6L550.3 250.5L550.9 244.8L551.5 238.9L552.0 233.0L552.6 227.3L553.2 222.3L553.8 218.0L554.4 214.8L555.0 212.9L555.6 212.2L556.1 212.9L556.6 215.1L557.1 218.6L557.6 223.3L558.2 228.9L558.7 235.1L559.2 241.6L559.7 248.2L560.2 254.4L560.7 260.0L561.2 264.6L561.7 268.2L562.2 270.3L562.7 271.1L563.3 270.4L563.8 268.2L564.4 264.9L564.9 260.3L565.4 254.9L566.0 248.9L566.5 242.6L567.1 236.2L567.6 230.2L568.2 224.8L568.7 220.3L569.2 216.9L569.8 214.8L570.3 214.1L570.9 214.8L571.4 217.1L571.9 220.6L572.4 225.4L573.0 231.0L573.5 237.4L574.0 244.0L574.5 250.7L575.1 257.0L575.6 262.7L576.1 267.4L576.6 271.0L577.2 273.2L577.7 273.9L578.2 273.3L578.7 271.3L579.2 268.1L579.7 263.9L580.1 258.9L580.6 253.2L581.1 247.3L581.6 241.4L582.1 235.8L582.6 230.8L583.1 226.5L583.6 223.4L584.1 221.4L584.6 220.7L585.1 221.3L585.7 223.0L586.2 225.6L586.8 229.2L587.4 233.4L587.9 238.2L588.5 243.2L589.0 248.2L589.6 252.9L590.2 257.2L590.7 260.7L591.3 263.4L591.8 265.0L592.4 265.6L593.0 265.0L593.5 263.4L594.1 260.7L594.6 257.2L595.2 252.9L595.8 248.2L596.3 243.2L596.9 238.2L597.4 233.4L598.0 229.2L598.6 225.6L599.1 223.0L599.7 221.3L600.2 220.7L600.7 221.3L601.3 222.9L601.8 225.5L602.3 228.9L602.8 233.0L603.3 237.5L603.8 242.3L604.3 247.2L604.8 251.7L605.3 255.8L605.8 259.2L606.3 261.8L606.9 263.4L607.4 263.9L607.9 263.3L608.4 261.3L609.0 258.2L609.5 254.0L610.1 249.0L610.6 243.5L611.2 237.6L611.7 231.7L612.2 226.2L612.8 221.2L613.3 217.0L613.9 213.9L614.4 211.9L615.0 211.2L615.5 212.0L616.0 214.4L616.5 218.2L617.0 223.3L617.5 229.3L618.0 236.1L618.5 243.2L619.0 250.3L619.5 257.0L620.0 263.1L620.6 268.1L621.1 271.9L621.6 274.3L622.1 275.1L622.6 274.4L623.2 272.4L623.7 269.1L624.2 264.7L624.8 259.5L625.3 253.7L625.9 247.6L626.4 241.4L627.0 235.6L627.5 230.4L628.0 226.0L628.6 222.8L629.1 220.7L629.7 220.0L630.2 220.6L630.7 222.3L631.2 224.9L631.7 228.5L632.2 232.8L632.7 237.6L633.2 242.6L633.7 247.6L634.3 252.4L634.8 256.6L635.3 260.2L635.8 262.9L636.3 264.6L636.8 265.1L637.2 264.5L637.6 262.7L638.1 259.8L638.5 256.0L638.9 251.4L639.3 246.2L639.8 240.8L640.2 235.4L640.6 230.2L641.0 225.6L641.5 221.8L641.9 218.9L642.3 217.1L642.7 216.5L643.2 217.2L643.7 219.2L644.3 222.5L644.8 226.9L645.3 232.1L645.8 238.0L646.3 244.1L646.8 250.3L647.3 256.1L647.8 261.4L648.3 265.7L648.8 269.0L649.3 271.1L649.9 271.8L650.4 271.1L651.0 269.2L651.5 266.0L652.1 261.8L652.6 256.8L653.2 251.2L653.8 245.3L654.3 239.4L654.9 233.8L655.4 228.8L656.0 224.6L656.6 221.5L657.1 219.5L657.7 218.8L658.2 219.4L658.8 221.1L659.3 223.8L659.9 227.5L660.4 231.8L660.9 236.7L661.5 241.8L662.0 246.8L662.6 251.7L663.1 256.0L663.7 259.7L664.2 262.4L664.7 264.1L665.3 264.7L665.8 264.2L666.3 262.7L666.9 260.4L667.4 257.4L667.9 253.7L668.4 249.6L669.0 245.3L669.5 241.0L670.0 236.9L670.5 233.2L671.1 230.2L671.6 227.9L672.1 226.4L672.6 226.0L673.1 226.4L673.6 227.8L674.1 230.1L674.6 233.0L675.1 236.6L675.6 240.5L676.1 244.7L676.6 248.9L677.1 252.9L677.6 256.4L678.1 259.4L678.5 261.6L679.0 263.0L679.5 263.5L680.1 262.9L680.6 261.1L681.1 258.1L681.6 254.3L682.2 249.6L682.7 244.5L683.2 239.0L683.7 233.6L684.3 228.4L684.8 223.8L685.3 219.9L685.8 217.0L686.4 215.2L686.9 214.6L687.4 215.2L687.9 217.2L688.4 220.4L688.9 224.6L689.4 229.7L689.9 235.3L690.4 241.3L691.0 247.2L691.5 252.9L692.0 257.9L692.5 262.2L693.0 265.3L693.5 267.3L694.0 268.0L694.5 267.3L695.1 265.5L695.6 262.4L696.2 258.4L696.7 253.5L697.3 248.1L697.8 242.5L698.3 236.8L698.9 231.4L699.4 226.6L700.0 222.5L700.5 219.5L701.1 217.6L701.6 216.9L702.1 217.7L702.7 219.9L703.2 223.4L703.8 228.0L704.3 233.6L704.9 239.8L705.4 246.4L705.9 252.9L706.5 259.2L707.0 264.7L707.6 269.4L708.1 272.9L708.7 275.1L709.2 275.8L709.8 275.1L710.4 273.0L711.0 269.5L711.6 265.0L712.2 259.6L712.8 253.5L713.4 247.1L713.9 240.7L714.5 234.6L715.1 229.2L715.7 224.6L716.3 221.2L716.9 219.1L717.5 218.4L718.1 218.9L718.6 220.4L719.2 222.8L719.7 226.0L720.3 229.8L720.9 234.1L721.4 238.5L722.0 243.0L722.5 247.3L723.1 251.1L723.7 254.3L724.2 256.7L724.8 258.2L725.3 258.7L725.8 258.3L726.2 257.0L726.6 255.0L727.0 252.3L727.5 249.1L727.9 245.5L728.3 241.8L728.7 238.0L729.2 234.4L729.6 231.2L730.0 228.5L730.4 226.5L730.9 225.2L731.3 224.8L731.8 225.3L732.4 226.8L732.9 229.3L733.4 232.6L734.0 236.5L734.5 240.9L735.1 245.5L735.6 250.2L736.2 254.6L736.7 258.5L737.2 261.8L737.8 264.3L738.3 265.8L738.9 266.3L739.3 266.1L739.8 265.3L740.2 264.0L740.6 262.2L741.1 260.0L741.5 257.3L742.0 254.3L742.4 251.0L742.8 247.5L743.3 243.8L743.7 240.0L744.2 236.2L744.6 232.4L745.0 228.8" fill="none" stroke="#a9c6ea" stroke-width="1.15" stroke-linejoin="round"/><path d="M993.40 189.50L991.00 192.00L993.40 194.50" fill="none" stroke="#e8e8e8" stroke-width="1.25"/><path d="M1002.00 189.50L1004.40 192.00L1002.00 194.50" fill="none" stroke="#e8e8e8" stroke-width="1.25"/><path d="M785.15 237.32A16.3 16.3 0 1 1 801.45 237.32" fill="none" stroke="#1f252c" stroke-width="1.4"/><circle cx="793.3" cy="223.2" r="14.7" fill="none" stroke="#2e353e" stroke-width="1"/><circle cx="793.3" cy="223.2" r="12.7" fill="none" stroke="#1b2027" stroke-width="2.6"/><circle cx="793.3" cy="223.2" r="11.6" fill="none" stroke="#2f363f" stroke-width="0.9"/><path d="M786.38 233.85A12.7 12.7 0 1 1 804.81 217.83" fill="none" stroke="#20b3e5" stroke-width="2.8"/><circle cx="793.3" cy="223.2" r="10.299999999999999" fill="#14171b"/><circle cx="793.3" cy="223.2" r="9.399999999999999" fill="url(#kd)"/><line x1="796.62" y1="222.12" x2="801.23" y2="220.62" stroke="#f4f4f4" stroke-width="1.8" stroke-linecap="round"/><path d="M831.65 237.32A16.3 16.3 0 1 1 847.95 237.32" fill="none" stroke="#1f252c" stroke-width="1.4"/><circle cx="839.8" cy="223.2" r="14.7" fill="none" stroke="#2e353e" stroke-width="1"/><circle cx="839.8" cy="223.2" r="12.7" fill="none" stroke="#1b2027" stroke-width="2.6"/><circle cx="839.8" cy="223.2" r="11.6" fill="none" stroke="#2f363f" stroke-width="0.9"/><path d="M832.88 233.85A12.7 12.7 0 0 1 839.80 210.50" fill="none" stroke="#20b3e5" stroke-width="2.8"/><circle cx="839.8" cy="223.2" r="10.299999999999999" fill="#14171b"/><circle cx="839.8" cy="223.2" r="9.399999999999999" fill="url(#kd)"/><line x1="839.80" y1="219.71" x2="839.80" y2="214.86" stroke="#f4f4f4" stroke-width="1.8" stroke-linecap="round"/><path d="M878.65 237.32A16.3 16.3 0 1 1 894.95 237.32" fill="none" stroke="#1f252c" stroke-width="1.4"/><circle cx="886.8" cy="223.2" r="14.7" fill="none" stroke="#2e353e" stroke-width="1"/><circle cx="886.8" cy="223.2" r="12.7" fill="none" stroke="#1b2027" stroke-width="2.6"/><circle cx="886.8" cy="223.2" r="11.6" fill="none" stroke="#2f363f" stroke-width="0.9"/><path d="M879.88 233.85A12.7 12.7 0 1 1 893.72 233.85" fill="none" stroke="#20b3e5" stroke-width="2.8"/><circle cx="886.8" cy="223.2" r="10.299999999999999" fill="#14171b"/><circle cx="886.8" cy="223.2" r="9.399999999999999" fill="url(#kd)"/><line x1="888.28" y1="226.36" x2="890.33" y2="230.76" stroke="#f4f4f4" stroke-width="1.8" stroke-linecap="round"/><path d="M925.15 237.32A16.3 16.3 0 1 1 941.45 237.32" fill="none" stroke="#1f252c" stroke-width="1.4"/><circle cx="933.3" cy="223.2" r="14.7" fill="none" stroke="#2e353e" stroke-width="1"/><circle cx="933.3" cy="223.2" r="12.7" fill="none" stroke="#1b2027" stroke-width="2.6"/><circle cx="933.3" cy="223.2" r="11.6" fill="none" stroke="#2f363f" stroke-width="0.9"/><circle cx="933.3" cy="223.2" r="10.299999999999999" fill="#14171b"/><circle cx="933.3" cy="223.2" r="9.399999999999999" fill="url(#kd)"/><line x1="931.55" y1="226.22" x2="929.13" y2="230.42" stroke="#f4f4f4" stroke-width="1.8" stroke-linecap="round"/><path d="M995.55 237.32A16.3 16.3 0 1 1 1011.85 237.32" fill="none" stroke="#1f252c" stroke-width="1.4"/><circle cx="1003.7" cy="223.2" r="14.7" fill="none" stroke="#2e353e" stroke-width="1"/><circle cx="1003.7" cy="223.2" r="12.7" fill="none" stroke="#1b2027" stroke-width="2.6"/><circle cx="1003.7" cy="223.2" r="11.6" fill="none" stroke="#2f363f" stroke-width="0.9"/><path d="M996.78 233.85A12.7 12.7 0 0 1 993.97 215.04" fill="none" stroke="#20b3e5" stroke-width="2.8"/><circle cx="1003.7" cy="223.2" r="10.299999999999999" fill="#14171b"/><circle cx="1003.7" cy="223.2" r="9.399999999999999" fill="url(#kd)"/><line x1="1001.23" y1="220.73" x2="997.80" y2="217.30" stroke="#f4f4f4" stroke-width="1.8" stroke-linecap="round"/><path d="M1042.75 237.32A16.3 16.3 0 1 1 1059.05 237.32" fill="none" stroke="#1f252c" stroke-width="1.4"/><circle cx="1050.9" cy="223.2" r="14.7" fill="none" stroke="#2e353e" stroke-width="1"/><circle cx="1050.9" cy="223.2" r="12.7" fill="none" stroke="#1b2027" stroke-width="2.6"/><circle cx="1050.9" cy="223.2" r="11.6" fill="none" stroke="#2f363f" stroke-width="0.9"/><path d="M1043.98 233.85A12.7 12.7 0 1 1 1057.82 233.85" fill="none" stroke="#20b3e5" stroke-width="2.8"/><circle cx="1050.9" cy="223.2" r="10.299999999999999" fill="#14171b"/><circle cx="1050.9" cy="223.2" r="9.399999999999999" fill="url(#kd)"/><line x1="1052.38" y1="226.36" x2="1054.43" y2="230.76" stroke="#f4f4f4" stroke-width="1.8" stroke-linecap="round"/><path d="M993.40 266.90L991.00 269.40L993.40 271.90" fill="none" stroke="#e8e8e8" stroke-width="1.25"/><path d="M1002.00 266.90L1004.40 269.40L1002.00 271.90" fill="none" stroke="#e8e8e8" stroke-width="1.25"/><path d="M878.65 315.12A16.3 16.3 0 1 1 894.95 315.12" fill="none" stroke="#1f252c" stroke-width="1.4"/><circle cx="886.8" cy="301" r="14.7" fill="none" stroke="#2e353e" stroke-width="1"/><circle cx="886.8" cy="301" r="12.7" fill="none" stroke="#1b2027" stroke-width="2.6"/><circle cx="886.8" cy="301" r="11.6" fill="none" stroke="#2f363f" stroke-width="0.9"/><path d="M879.88 311.65A12.7 12.7 0 1 1 899.49 300.56" fill="none" stroke="#20b3e5" stroke-width="2.8"/><circle cx="886.8" cy="301" r="10.299999999999999" fill="#14171b"/><circle cx="886.8" cy="301" r="9.399999999999999" fill="url(#kd)"/><line x1="890.29" y1="301.00" x2="895.14" y2="301.00" stroke="#f4f4f4" stroke-width="1.8" stroke-linecap="round"/><path d="M925.15 315.12A16.3 16.3 0 1 1 941.45 315.12" fill="none" stroke="#1f252c" stroke-width="1.4"/><circle cx="933.3" cy="301" r="14.7" fill="none" stroke="#2e353e" stroke-width="1"/><circle cx="933.3" cy="301" r="12.7" fill="none" stroke="#1b2027" stroke-width="2.6"/><circle cx="933.3" cy="301" r="11.6" fill="none" stroke="#2f363f" stroke-width="0.9"/><circle cx="933.3" cy="301" r="10.299999999999999" fill="#14171b"/><circle cx="933.3" cy="301" r="9.399999999999999" fill="url(#kd)"/><line x1="931.55" y1="304.02" x2="929.13" y2="308.22" stroke="#f4f4f4" stroke-width="1.8" stroke-linecap="round"/><path d="M972.35 315.12A16.3 16.3 0 1 1 988.65 315.12" fill="none" stroke="#1f252c" stroke-width="1.4"/><circle cx="980.5" cy="301" r="14.7" fill="none" stroke="#2e353e" stroke-width="1"/><circle cx="980.5" cy="301" r="12.7" fill="none" stroke="#1b2027" stroke-width="2.6"/><circle cx="980.5" cy="301" r="11.6" fill="none" stroke="#2f363f" stroke-width="0.9"/><path d="M973.58 311.65A12.7 12.7 0 1 1 987.42 311.65" fill="none" stroke="#20b3e5" stroke-width="2.8"/><circle cx="980.5" cy="301" r="10.299999999999999" fill="#14171b"/><circle cx="980.5" cy="301" r="9.399999999999999" fill="url(#kd)"/><line x1="981.98" y1="304.16" x2="984.03" y2="308.56" stroke="#f4f4f4" stroke-width="1.8" stroke-linecap="round"/><path d="M425.60 392.90A13.4 13.4 0 1 1 439.00 392.90" fill="none" stroke="#1f252c" stroke-width="1.4"/><circle cx="432.3" cy="381.3" r="11.8" fill="none" stroke="#2e353e" stroke-width="1"/><circle cx="432.3" cy="381.3" r="9.8" fill="none" stroke="#1b2027" stroke-width="2.6"/><circle cx="432.3" cy="381.3" r="9.1" fill="none" stroke="#2f363f" stroke-width="0.9"/><circle cx="432.3" cy="381.3" r="7.8" fill="#14171b"/><circle cx="432.3" cy="381.3" r="6.9" fill="url(#kd)"/><line x1="431.00" y1="383.54" x2="429.20" y2="386.66" stroke="#f4f4f4" stroke-width="1.8" stroke-linecap="round"/><path d="M317.40 406.95L320.00 409.65L322.60 406.95" fill="none" stroke="#e8e8e8" stroke-width="1.3"/><path d="M374.40 406.95L377.00 409.65L379.60 406.95" fill="none" stroke="#e8e8e8" stroke-width="1.3"/><circle cx="432.3" cy="409.8" r="7" fill="#2d333b" stroke="#232930" stroke-width="1"/><line x1="431.07" y1="411.92" x2="429.50" y2="414.65" stroke="#3b424b" stroke-width="1.6" stroke-linecap="round"/><path d="M425.51 416.59A9.6 9.6 0 0 1 424.95 403.63" fill="none" stroke="#1d4e68" stroke-width="1.6"/><path d="M317.40 438.15L320.00 440.85L322.60 438.15" fill="none" stroke="#e8e8e8" stroke-width="1.3"/><path d="M374.40 438.15L377.00 440.85L379.60 438.15" fill="none" stroke="#e8e8e8" stroke-width="1.3"/><path d="M425.50 452.78A13.6 13.6 0 1 1 439.10 452.78" fill="none" stroke="#1f252c" stroke-width="1.4"/><circle cx="432.3" cy="441.0" r="12.0" fill="none" stroke="#2e353e" stroke-width="1"/><circle cx="432.3" cy="441.0" r="10" fill="none" stroke="#1b2027" stroke-width="2.6"/><circle cx="432.3" cy="441.0" r="9.1" fill="none" stroke="#2f363f" stroke-width="0.9"/><path d="M432.30 431.00A10 10 0 0 1 441.96 438.41" fill="none" stroke="#20b3e5" stroke-width="2.2"/><circle cx="432.3" cy="441.0" r="7.8" fill="#14171b"/><circle cx="432.3" cy="441.0" r="6.9" fill="url(#kd)"/><line x1="434.80" y1="440.33" x2="438.28" y2="439.40" stroke="#f4f4f4" stroke-width="1.8" stroke-linecap="round"/><path d="M317.40 469.15L320.00 471.85L322.60 469.15" fill="none" stroke="#e8e8e8" stroke-width="1.3"/><path d="M374.40 469.15L377.00 471.85L379.60 469.15" fill="none" stroke="#e8e8e8" stroke-width="1.3"/><path d="M425.50 483.78A13.6 13.6 0 1 1 439.10 483.78" fill="none" stroke="#1f252c" stroke-width="1.4"/><circle cx="432.3" cy="472.0" r="12.0" fill="none" stroke="#2e353e" stroke-width="1"/><circle cx="432.3" cy="472.0" r="10" fill="none" stroke="#1b2027" stroke-width="2.6"/><circle cx="432.3" cy="472.0" r="9.1" fill="none" stroke="#2f363f" stroke-width="0.9"/><path d="M437.30 463.34A10 10 0 0 1 437.30 480.66" fill="none" stroke="#20b3e5" stroke-width="2.2"/><circle cx="432.3" cy="472.0" r="7.8" fill="#14171b"/><circle cx="432.3" cy="472.0" r="6.9" fill="url(#kd)"/><line x1="433.60" y1="474.24" x2="435.40" y2="477.36" stroke="#f4f4f4" stroke-width="1.8" stroke-linecap="round"/><path d="M518.50 377.00L516.10 379.50L518.50 382.00" fill="none" stroke="#e8e8e8" stroke-width="1.25"/><path d="M527.30 377.00L529.70 379.50L527.30 382.00" fill="none" stroke="#e8e8e8" stroke-width="1.25"/><path d="M612 460.6C620 420 650 393 693.2 388.2L860.3 397.9C905 425 950 447 1000.4 460.8L1000.4 464.7L612 464.7Z" fill="#3a2b1c"/><path d="M612 460.6C620 420 650 393 693.2 388.2L860.3 397.9C905 425 950 447 1000.4 460.8" fill="none" stroke="#e08a2a" stroke-width="1.2"/><circle cx="693.2" cy="388.2" r="3.6" fill="#f39a2c"/><circle cx="860.3" cy="397.9" r="3.6" fill="#f39a2c"/><circle cx="1000.4" cy="460.8" r="3.6" fill="#f39a2c"/><circle cx="612" cy="460.6" r="3.5" fill="#23b0e2"/><path d="M614.25 501.99A16.5 16.5 0 1 1 630.75 501.99" fill="none" stroke="#1f252c" stroke-width="1.4"/><circle cx="622.5" cy="487.7" r="14.9" fill="none" stroke="#2e353e" stroke-width="1"/><circle cx="622.5" cy="487.7" r="12.9" fill="none" stroke="#1b2027" stroke-width="2.6"/><circle cx="622.5" cy="487.7" r="11.700000000000001" fill="none" stroke="#2f363f" stroke-width="0.9"/><path d="M613.55 500.96A16 16 0 1 1 631.45 500.96" fill="none" stroke="url(#org)" stroke-width="2"/><circle cx="622.5" cy="487.7" r="10.4" fill="#14171b"/><circle cx="622.5" cy="487.7" r="9.5" fill="url(#kd)"/><line x1="620.74" y1="490.76" x2="618.29" y2="495.00" stroke="#f4f4f4" stroke-width="1.8" stroke-linecap="round"/><path d="M653.05 501.99A16.5 16.5 0 1 1 669.55 501.99" fill="none" stroke="#1f252c" stroke-width="1.4"/><circle cx="661.3" cy="487.7" r="14.9" fill="none" stroke="#2e353e" stroke-width="1"/><circle cx="661.3" cy="487.7" r="12.9" fill="none" stroke="#1b2027" stroke-width="2.6"/><circle cx="661.3" cy="487.7" r="11.700000000000001" fill="none" stroke="#2f363f" stroke-width="0.9"/><circle cx="661.3" cy="487.7" r="10.4" fill="#14171b"/><circle cx="661.3" cy="487.7" r="9.5" fill="url(#kd)"/><line x1="659.54" y1="490.76" x2="657.09" y2="495.00" stroke="#f4f4f4" stroke-width="1.8" stroke-linecap="round"/><path d="M692.15 501.99A16.5 16.5 0 1 1 708.65 501.99" fill="none" stroke="#1f252c" stroke-width="1.4"/><circle cx="700.4" cy="487.7" r="14.9" fill="none" stroke="#2e353e" stroke-width="1"/><circle cx="700.4" cy="487.7" r="12.9" fill="none" stroke="#1b2027" stroke-width="2.6"/><circle cx="700.4" cy="487.7" r="11.700000000000001" fill="none" stroke="#2f363f" stroke-width="0.9"/><path d="M691.45 500.96A16 16 0 1 1 709.35 500.96" fill="none" stroke="url(#org)" stroke-width="2"/><circle cx="700.4" cy="487.7" r="10.4" fill="#14171b"/><circle cx="700.4" cy="487.7" r="9.5" fill="url(#kd)"/><line x1="698.64" y1="490.76" x2="696.19" y2="495.00" stroke="#f4f4f4" stroke-width="1.8" stroke-linecap="round"/><path d="M731.15 501.99A16.5 16.5 0 1 1 747.65 501.99" fill="none" stroke="#1f252c" stroke-width="1.4"/><circle cx="739.4" cy="487.7" r="14.9" fill="none" stroke="#2e353e" stroke-width="1"/><circle cx="739.4" cy="487.7" r="12.9" fill="none" stroke="#1b2027" stroke-width="2.6"/><circle cx="739.4" cy="487.7" r="11.700000000000001" fill="none" stroke="#2f363f" stroke-width="0.9"/><path d="M730.45 500.96A16 16 0 1 1 748.35 500.96" fill="none" stroke="url(#org)" stroke-width="2"/><circle cx="739.4" cy="487.7" r="10.4" fill="#14171b"/><circle cx="739.4" cy="487.7" r="9.5" fill="url(#kd)"/><line x1="737.64" y1="490.76" x2="735.19" y2="495.00" stroke="#f4f4f4" stroke-width="1.8" stroke-linecap="round"/><path d="M769.65 501.99A16.5 16.5 0 1 1 786.15 501.99" fill="none" stroke="#1f252c" stroke-width="1.4"/><circle cx="777.9" cy="487.7" r="14.9" fill="none" stroke="#2e353e" stroke-width="1"/><circle cx="777.9" cy="487.7" r="12.9" fill="none" stroke="#1b2027" stroke-width="2.6"/><circle cx="777.9" cy="487.7" r="11.700000000000001" fill="none" stroke="#2f363f" stroke-width="0.9"/><path d="M768.95 500.96A16 16 0 1 1 786.85 500.96" fill="none" stroke="url(#org)" stroke-width="2"/><circle cx="777.9" cy="487.7" r="10.4" fill="#14171b"/><circle cx="777.9" cy="487.7" r="9.5" fill="url(#kd)"/><line x1="776.14" y1="490.76" x2="773.69" y2="495.00" stroke="#f4f4f4" stroke-width="1.8" stroke-linecap="round"/><path d="M281.8 558.2V548.9H291.8" stroke="#1ca4d3" stroke-width="1.4" fill="none"/><path d="M351.6 548.9H361.6V558.2" stroke="#1ca4d3" stroke-width="1.4" fill="none"/><path d="M281.8 593.4V602.6H291.8" stroke="#1ca4d3" stroke-width="1.4" fill="none"/><path d="M351.6 602.6H361.6V593.4" stroke="#1ca4d3" stroke-width="1.4" fill="none"/><line x1="280.00" y1="662.80" x2="280.00" y2="660.30" stroke="#fff" stroke-width="1.7"/><line x1="281.70" y1="663.50" x2="283.46" y2="661.74" stroke="#fff" stroke-width="1.7"/><line x1="282.40" y1="665.20" x2="284.90" y2="665.20" stroke="#fff" stroke-width="1.7"/><line x1="281.70" y1="666.90" x2="283.46" y2="668.66" stroke="#fff" stroke-width="1.7"/><line x1="280.00" y1="667.60" x2="280.00" y2="670.10" stroke="#fff" stroke-width="1.7"/><line x1="278.30" y1="666.90" x2="276.54" y2="668.66" stroke="#fff" stroke-width="1.7"/><line x1="277.60" y1="665.20" x2="275.10" y2="665.20" stroke="#fff" stroke-width="1.7"/><line x1="278.30" y1="663.50" x2="276.54" y2="661.74" stroke="#fff" stroke-width="1.7"/><circle cx="280" cy="665.2" r="3.3" fill="#fff"/><circle cx="280" cy="665.2" r="1.3" fill="#6a6e73"/><path d="M355.80 664.05L358.00 666.55L360.20 664.05" fill="none" stroke="#e8e8e8" stroke-width="1.1"/><path d="M426.30 663.10L428.30 660.90L430.30 663.10" fill="none" stroke="#e8e8e8" stroke-width="1"/><path d="M426.30 666.90L428.30 669.10L430.30 666.90" fill="none" stroke="#e8e8e8" stroke-width="1"/><path d="M512.10 664.05L514.30 666.55L516.50 664.05" fill="none" stroke="#e8e8e8" stroke-width="1.1"/><path d="M584.30 663.10L586.30 660.90L588.30 663.10" fill="none" stroke="#e8e8e8" stroke-width="1"/><path d="M584.30 666.90L586.30 669.10L588.30 666.90" fill="none" stroke="#e8e8e8" stroke-width="1"/><circle cx="625.5" cy="563.9" r="12.2" fill="none" stroke="#a9a9a9" stroke-width="2.5"/><circle cx="625.5" cy="563.9" r="13.7" fill="none" stroke="#c0c0c0" stroke-width="0.7"/><path d="M618.86 574.13A12.2 12.2 0 0 1 613.42 562.20" fill="none" stroke="#9fd9ec" stroke-width="3.8"/><path d="M618.86 574.13A12.2 12.2 0 0 1 613.42 562.20" fill="none" stroke="#2a9abc" stroke-width="2.7"/><circle cx="625.5" cy="563.9" r="9.5" fill="url(#kl)"/><line x1="622.13" y1="563.31" x2="617.27" y2="562.45" stroke="#f6f6f6" stroke-width="1.9" stroke-linecap="round"/><circle cx="676.1" cy="563.9" r="12.2" fill="none" stroke="#a9a9a9" stroke-width="2.5"/><circle cx="676.1" cy="563.9" r="13.7" fill="none" stroke="#c0c0c0" stroke-width="0.7"/><path d="M669.46 574.13A12.2 12.2 0 1 1 685.45 556.06" fill="none" stroke="#9fd9ec" stroke-width="3.8"/><path d="M669.46 574.13A12.2 12.2 0 1 1 685.45 556.06" fill="none" stroke="#2a9abc" stroke-width="2.7"/><circle cx="676.1" cy="563.9" r="9.5" fill="url(#kl)"/><line x1="678.79" y1="561.79" x2="682.69" y2="558.75" stroke="#f6f6f6" stroke-width="1.9" stroke-linecap="round"/><circle cx="726.8" cy="563.9" r="12.2" fill="none" stroke="#a9a9a9" stroke-width="2.5"/><circle cx="726.8" cy="563.9" r="13.7" fill="none" stroke="#c0c0c0" stroke-width="0.7"/><path d="M720.16 574.13A12.2 12.2 0 0 1 717.19 571.41" fill="none" stroke="#9fd9ec" stroke-width="3.8"/><path d="M720.16 574.13A12.2 12.2 0 0 1 717.19 571.41" fill="none" stroke="#2a9abc" stroke-width="2.7"/><circle cx="726.8" cy="563.9" r="9.5" fill="url(#kl)"/><line x1="724.99" y1="566.80" x2="722.37" y2="570.99" stroke="#f6f6f6" stroke-width="1.9" stroke-linecap="round"/><circle cx="777.4" cy="563.9" r="12.2" fill="none" stroke="#a9a9a9" stroke-width="2.5"/><circle cx="777.4" cy="563.9" r="13.7" fill="none" stroke="#c0c0c0" stroke-width="0.7"/><circle cx="777.4" cy="563.9" r="9.5" fill="url(#kl)"/><line x1="775.79" y1="566.92" x2="773.48" y2="571.28" stroke="#f6f6f6" stroke-width="1.9" stroke-linecap="round"/><circle cx="625.5" cy="631.9" r="12.2" fill="none" stroke="#a9a9a9" stroke-width="2.5"/><circle cx="625.5" cy="631.9" r="13.7" fill="none" stroke="#c0c0c0" stroke-width="0.7"/><path d="M618.86 642.13A12.2 12.2 0 0 1 613.31 631.47" fill="none" stroke="#9fd9ec" stroke-width="3.8"/><path d="M618.86 642.13A12.2 12.2 0 0 1 613.31 631.47" fill="none" stroke="#2a9abc" stroke-width="2.7"/><circle cx="625.5" cy="631.9" r="9.5" fill="url(#kl)"/><line x1="622.09" y1="631.60" x2="617.17" y2="631.17" stroke="#f6f6f6" stroke-width="1.9" stroke-linecap="round"/><circle cx="676.1" cy="631.9" r="12.2" fill="none" stroke="#a9a9a9" stroke-width="2.5"/><circle cx="676.1" cy="631.9" r="13.7" fill="none" stroke="#c0c0c0" stroke-width="0.7"/><path d="M669.46 642.13A12.2 12.2 0 1 1 688.03 629.36" fill="none" stroke="#9fd9ec" stroke-width="3.8"/><path d="M669.46 642.13A12.2 12.2 0 1 1 688.03 629.36" fill="none" stroke="#2a9abc" stroke-width="2.7"/><circle cx="676.1" cy="631.9" r="9.5" fill="url(#kl)"/><line x1="679.47" y1="631.31" x2="684.33" y2="630.45" stroke="#f6f6f6" stroke-width="1.9" stroke-linecap="round"/><circle cx="726.8" cy="631.9" r="12.2" fill="none" stroke="#a9a9a9" stroke-width="2.5"/><circle cx="726.8" cy="631.9" r="13.7" fill="none" stroke="#c0c0c0" stroke-width="0.7"/><path d="M720.16 642.13A12.2 12.2 0 0 1 715.02 628.74" fill="none" stroke="#9fd9ec" stroke-width="3.8"/><path d="M720.16 642.13A12.2 12.2 0 0 1 715.02 628.74" fill="none" stroke="#2a9abc" stroke-width="2.7"/><circle cx="726.8" cy="631.9" r="9.5" fill="url(#kl)"/><line x1="723.55" y1="630.84" x2="718.85" y2="629.32" stroke="#f6f6f6" stroke-width="1.9" stroke-linecap="round"/><circle cx="777.4" cy="631.9" r="12.2" fill="none" stroke="#a9a9a9" stroke-width="2.5"/><circle cx="777.4" cy="631.9" r="13.7" fill="none" stroke="#c0c0c0" stroke-width="0.7"/><path d="M770.76 642.13A12.2 12.2 0 1 1 788.71 636.47" fill="none" stroke="#9fd9ec" stroke-width="3.8"/><path d="M770.76 642.13A12.2 12.2 0 1 1 788.71 636.47" fill="none" stroke="#2a9abc" stroke-width="2.7"/><circle cx="777.4" cy="631.9" r="9.5" fill="url(#kl)"/><line x1="780.50" y1="633.35" x2="784.98" y2="635.43" stroke="#f6f6f6" stroke-width="1.9" stroke-linecap="round"/><path d="M854.3 560V566M854.3 592V616M854.3 642V648M810.3 603.8H815.8M842.3 603.8H866.3M892.8 603.8H898.3" stroke="#173240" stroke-width="0.8" fill="none"/><path d="M950.7 560V566M950.7 592V616M950.7 642V648M906.7 603.8H912.2M938.7 603.8H962.7M989.2 603.8H994.7" stroke="#173240" stroke-width="0.8" fill="none"/><circle cx="833" cy="583.7" r="4.2" fill="#41a8ee"/><circle cx="965.5" cy="628.3" r="4.2" fill="#41a8ee"/><circle cx="1023.1" cy="563.9" r="12.2" fill="none" stroke="#a9a9a9" stroke-width="2.5"/><circle cx="1023.1" cy="563.9" r="13.7" fill="none" stroke="#c0c0c0" stroke-width="0.7"/><path d="M1016.46 574.13A12.2 12.2 0 0 1 1011.79 568.47" fill="none" stroke="#9fd9ec" stroke-width="3.8"/><path d="M1016.46 574.13A12.2 12.2 0 0 1 1011.79 568.47" fill="none" stroke="#2a9abc" stroke-width="2.7"/><circle cx="1023.1" cy="563.9" r="9.5" fill="url(#kl)"/><line x1="1019.93" y1="565.18" x2="1015.35" y2="567.03" stroke="#f6f6f6" stroke-width="1.9" stroke-linecap="round"/><circle cx="1062" cy="563.9" r="12.2" fill="none" stroke="#a9a9a9" stroke-width="2.5"/><circle cx="1062" cy="563.9" r="13.7" fill="none" stroke="#c0c0c0" stroke-width="0.7"/><path d="M1055.36 574.13A12.2 12.2 0 0 1 1050.07 561.36" fill="none" stroke="#9fd9ec" stroke-width="3.8"/><path d="M1055.36 574.13A12.2 12.2 0 0 1 1050.07 561.36" fill="none" stroke="#2a9abc" stroke-width="2.7"/><circle cx="1062" cy="563.9" r="9.5" fill="url(#kl)"/><line x1="1058.70" y1="563.01" x2="1053.92" y2="561.74" stroke="#f6f6f6" stroke-width="1.9" stroke-linecap="round"/><circle cx="1023.1" cy="631.9" r="12.2" fill="none" stroke="#a9a9a9" stroke-width="2.5"/><circle cx="1023.1" cy="631.9" r="13.7" fill="none" stroke="#c0c0c0" stroke-width="0.7"/><path d="M1016.46 642.13A12.2 12.2 0 1 1 1034.56 636.07" fill="none" stroke="#9fd9ec" stroke-width="3.8"/><path d="M1016.46 642.13A12.2 12.2 0 1 1 1034.56 636.07" fill="none" stroke="#2a9abc" stroke-width="2.7"/><circle cx="1023.1" cy="631.9" r="9.5" fill="url(#kl)"/><line x1="1026.27" y1="633.18" x2="1030.85" y2="635.03" stroke="#f6f6f6" stroke-width="1.9" stroke-linecap="round"/><circle cx="1062" cy="631.9" r="12.2" fill="none" stroke="#a9a9a9" stroke-width="2.5"/><circle cx="1062" cy="631.9" r="13.7" fill="none" stroke="#c0c0c0" stroke-width="0.7"/><path d="M1055.36 642.13A12.2 12.2 0 0 1 1049.81 631.47" fill="none" stroke="#9fd9ec" stroke-width="3.8"/><path d="M1055.36 642.13A12.2 12.2 0 0 1 1049.81 631.47" fill="none" stroke="#2a9abc" stroke-width="2.7"/><circle cx="1062" cy="631.9" r="9.5" fill="url(#kl)"/><line x1="1058.59" y1="631.60" x2="1053.67" y2="631.17" stroke="#f6f6f6" stroke-width="1.9" stroke-linecap="round"/></svg>
<div class="tl"><span class="t" style="left:235.0px;top:126.58px;font-size:8.6px;color:#f4f4f4;transform:translateX(-50%) scaleX(0.953);transform-origin:50% 50%;font-weight:700;">BROWSE</span><span class="t" style="left:305.5px;top:126.58px;font-size:8.6px;color:#f4f4f4;transform:translateX(-50%) scaleX(0.965);transform-origin:50% 50%;font-weight:700;">SIMPLE</span><span class="t" style="left:375.5px;top:126.58px;font-size:8.6px;color:#f4f4f4;transform:translateX(-50%) scaleX(0.961);transform-origin:50% 50%;font-weight:700;">ADVANCED</span><span class="t" style="left:628.5px;top:126.52px;font-size:9px;color:#f4f4f4;transform:translateX(-50%) scaleX(0.936);transform-origin:50% 50%;font-weight:700;">Bass | Arctic Noise Lead</span><span class="t" style="left:806.4px;top:126.52px;font-size:9px;color:#f4f4f4;transform:translateX(-50%) scaleX(1.000);transform-origin:50% 50%;font-weight:700;">File</span><span class="t" style="left:844.9px;top:126.52px;font-size:9px;color:#f4f4f4;transform:translateX(-50%) scaleX(0.951);transform-origin:50% 50%;font-weight:700;">Save</span><span class="t" style="left:892.5px;top:126.52px;font-size:9px;color:#f4f4f4;transform:translateX(-50%) scaleX(0.937);transform-origin:50% 50%;font-weight:700;">Save As</span><span class="t" style="left:929.8px;top:128.39px;font-size:6.4px;color:#5c5c5c;transform:scaleX(1.023);transform-origin:0 50%;font-weight:700;">Quality</span><span class="t" style="left:970.0px;top:126.72px;font-size:9px;color:#f6f6f6;transform:translateX(-50%) scaleX(0.957);transform-origin:50% 50%;font-weight:700;">Great</span><span class="t" style="left:1036.7px;top:128.02px;font-size:7.6px;color:#161616;transform:translateX(-50%) scaleX(1.000);transform-origin:50% 50%;font-weight:700;">Vol</span><span class="t" style="left:200.0px;top:164.08px;font-size:8.6px;color:#f0f0f0;transform:scaleX(0.928);transform-origin:0 50%;font-weight:700;">GLOBAL</span><span class="t" style="left:200.0px;top:194.42px;font-size:9px;color:#1ca4d3;transform:scaleX(0.954);transform-origin:0 50%;font-weight:700;">A</span><span class="t" style="left:200.0px;top:224.72px;font-size:9px;color:#f0f0f0;transform:scaleX(0.923);transform-origin:0 50%;font-weight:700;">B</span><span class="t" style="left:200.0px;top:255.22px;font-size:9px;color:#f0f0f0;transform:scaleX(0.969);transform-origin:0 50%;font-weight:700;">C</span><span class="t" style="left:200.0px;top:285.72px;font-size:9px;color:#f0f0f0;transform:scaleX(0.969);transform-origin:0 50%;font-weight:700;">D</span><span class="t" style="left:200.0px;top:316.48px;font-size:8.6px;color:#f0f0f0;transform:scaleX(1.000);transform-origin:0 50%;font-weight:700;">MORPH</span><span class="t" style="left:270.1px;top:168.18px;font-size:8.6px;color:#f4f4f4;transform:translateX(-50%) scaleX(0.879);transform-origin:50% 50%;font-weight:700;">On</span><span class="t" style="left:344.0px;top:168.29px;font-size:9.2px;color:#f2f2f2;transform:translateX(-50%) scaleX(0.919);transform-origin:50% 50%;font-weight:700;">Harmonic Edge</span><span class="t" style="left:435.0px;top:167.71px;font-size:9.8px;color:#f2f2f2;transform:translateX(-50%) scaleX(0.979);transform-origin:50% 50%;font-weight:700;">S</span><span class="t" style="left:491.3px;top:168.29px;font-size:9.2px;color:#f2f2f2;transform:translateX(-50%) scaleX(0.950);transform-origin:50% 50%;font-weight:700;">Edit</span><span class="t" style="left:282.3px;top:223.62px;font-size:7.6px;color:#f2f2f2;transform:translateX(-50%) scaleX(1.000);transform-origin:50% 50%;font-weight:700;">Vol</span><span class="t" style="left:321.4px;top:223.62px;font-size:7.6px;color:#f2f2f2;transform:translateX(-50%) scaleX(1.000);transform-origin:50% 50%;font-weight:700;">Pan</span><span class="t" style="left:374.5px;top:223.62px;font-size:7.6px;color:#f2f2f2;transform:translateX(-50%) scaleX(1.039);transform-origin:50% 50%;font-weight:700;">Coarse Tune Fine</span><span class="t" style="left:454.3px;top:223.62px;font-size:7.6px;color:#f2f2f2;transform:translateX(-50%) scaleX(1.000);transform-origin:50% 50%;font-weight:700;">Position</span><span class="t" style="left:493.4px;top:223.62px;font-size:7.6px;color:#f2f2f2;transform:translateX(-50%) scaleX(1.000);transform-origin:50% 50%;font-weight:700;">Speed</span><span class="t" style="left:275.0px;top:246.72px;font-size:7.6px;color:#f2f2f2;transform:translateX(-50%) scaleX(1.000);transform-origin:50% 50%;font-weight:700;">Wait</span><span class="t" style="left:388.8px;top:241.69px;font-size:9.2px;color:#f2f2f2;transform:translateX(-50%) scaleX(0.928);transform-origin:50% 50%;font-weight:700;">Key+PB</span><span class="t" style="left:467.1px;top:241.69px;font-size:9.2px;color:#f2f2f2;transform:translateX(-50%) scaleX(0.888);transform-origin:50% 50%;font-weight:700;">Continuous</span><span class="t" style="left:365.3px;top:256.13px;font-size:6.8px;color:#59616c;transform:scaleX(1.015);transform-origin:0 50%;-webkit-text-stroke:0.2px #59616c;">Keyscale</span><span class="t" style="left:435.6px;top:256.13px;font-size:6.8px;color:#59616c;transform:scaleX(1.029);transform-origin:0 50%;-webkit-text-stroke:0.2px #59616c;">Loop Mode</span><span class="t" style="left:259.9px;top:276.49px;font-size:9.2px;color:#868d96;transform:scaleX(0.893);transform-origin:0 50%;-webkit-text-stroke:0.2px #868d96;">FILTER</span><span class="t" style="left:266.5px;top:296.37px;font-size:9px;color:#f4f4f4;transform:translateX(-50%) scaleX(0.839);transform-origin:50% 50%;font-weight:700;">1</span><span class="t" style="left:281.8px;top:296.37px;font-size:9px;color:#f4f4f4;transform:translateX(-50%) scaleX(0.919);transform-origin:50% 50%;font-weight:700;">2</span><span class="t" style="left:297.3px;top:296.37px;font-size:9px;color:#f4f4f4;transform:translateX(-50%) scaleX(0.919);transform-origin:50% 50%;font-weight:700;">3</span><span class="t" style="left:272.7px;top:315.77px;font-size:9px;color:#f4f4f4;transform:translateX(-50%) scaleX(0.930);transform-origin:50% 50%;font-weight:700;">Ser</span><span class="t" style="left:300.6px;top:315.77px;font-size:9px;color:#f4f4f4;transform:translateX(-50%) scaleX(0.930);transform-origin:50% 50%;font-weight:700;">Par</span><span class="t" style="left:340.2px;top:276.98px;font-size:8.6px;color:#f4f4f4;transform:translateX(-50%) scaleX(0.879);transform-origin:50% 50%;font-weight:700;">On</span><span class="t" style="left:388.0px;top:276.89px;font-size:9.2px;color:#f2f2f2;transform:translateX(-50%) scaleX(0.903);transform-origin:50% 50%;font-weight:700;">LP2 BQ</span><span class="t" style="left:352.6px;top:325.42px;font-size:7.6px;color:#f2f2f2;transform:translateX(-50%) scaleX(1.000);transform-origin:50% 50%;font-weight:700;">Cutoff</span><span class="t" style="left:391.3px;top:325.42px;font-size:7.6px;color:#f2f2f2;transform:translateX(-50%) scaleX(1.000);transform-origin:50% 50%;font-weight:700;">Res</span><span class="t" style="left:486.3px;top:276.49px;font-size:9.2px;color:#868d96;transform:translateX(-50%) scaleX(0.958);transform-origin:50% 50%;-webkit-text-stroke:0.2px #868d96;">SEND</span><span class="t" style="left:481.4px;top:318.89px;font-size:9.2px;color:#f2f2f2;transform:translateX(-50%) scaleX(0.978);transform-origin:50% 50%;font-weight:700;">F1/F2</span><span class="t" style="left:540.2px;top:171.42px;font-size:9px;color:#c9ced4;transform:scaleX(0.948);transform-origin:0 50%;">VA SHAPE/NOISE</span><span class="t" style="left:783.5px;top:160.31px;font-size:8.4px;color:#f2f2f2;transform:translateX(-50%) scaleX(0.855);transform-origin:50% 50%;font-weight:700;">ADDITIVE</span><span class="t" style="left:835.9px;top:160.31px;font-size:8.4px;color:#4a525c;transform:translateX(-50%) scaleX(0.861);transform-origin:50% 50%;font-weight:700;">SPECTRAL</span><span class="t" style="left:880.9px;top:160.31px;font-size:8.4px;color:#4a525c;transform:translateX(-50%) scaleX(0.853);transform-origin:50% 50%;font-weight:700;">PITCH</span><span class="t" style="left:926.0px;top:160.31px;font-size:8.4px;color:#4a525c;transform:translateX(-50%) scaleX(0.881);transform-origin:50% 50%;font-weight:700;">FORMANT</span><span class="t" style="left:980.5px;top:160.31px;font-size:8.4px;color:#4a525c;transform:translateX(-50%) scaleX(0.874);transform-origin:50% 50%;font-weight:700;">GRANULAR</span><span class="t" style="left:1034.9px;top:160.31px;font-size:8.4px;color:#4a525c;transform:translateX(-50%) scaleX(0.889);transform-origin:50% 50%;font-weight:700;">SAMPLER</span><span class="t" style="left:1074.0px;top:160.31px;font-size:8.4px;color:#27a0c8;transform:translateX(-50%) scaleX(0.951);transform-origin:50% 50%;font-weight:700;">VA</span><span class="t" style="left:770.7px;top:187.59px;font-size:9.2px;color:#868d96;transform:scaleX(0.972);transform-origin:0 50%;-webkit-text-stroke:0.2px #868d96;">OSCILLATOR</span><span class="t" style="left:851.9px;top:187.88px;font-size:8.6px;color:#f4f4f4;transform:translateX(-50%) scaleX(0.879);transform-origin:50% 50%;font-weight:700;">On</span><span class="t" style="left:927.5px;top:187.89px;font-size:9.2px;color:#f2f2f2;transform:translateX(-50%) scaleX(0.919);transform-origin:50% 50%;font-weight:700;">Harmonic Edge</span><span class="t" style="left:793.3px;top:242.22px;font-size:7.6px;color:#f2f2f2;transform:translateX(-50%) scaleX(1.000);transform-origin:50% 50%;font-weight:700;">Vol</span><span class="t" style="left:839.8px;top:242.22px;font-size:7.6px;color:#f2f2f2;transform:translateX(-50%) scaleX(1.000);transform-origin:50% 50%;font-weight:700;">Sym</span><span class="t" style="left:886.8px;top:242.22px;font-size:7.6px;color:#f2f2f2;transform:translateX(-50%) scaleX(1.000);transform-origin:50% 50%;font-weight:700;">Phase</span><span class="t" style="left:933.5px;top:242.22px;font-size:7.6px;color:#f2f2f2;transform:translateX(-50%) scaleX(1.000);transform-origin:50% 50%;font-weight:700;">Sync</span><span class="t" style="left:1030.8px;top:242.22px;font-size:7.6px;color:#f2f2f2;transform:translateX(-50%) scaleX(1.044);transform-origin:50% 50%;font-weight:700;">Num -Uni- Amount</span><span class="t" style="left:770.7px;top:265.29px;font-size:9.2px;color:#868d96;transform:scaleX(0.961);transform-origin:0 50%;-webkit-text-stroke:0.2px #868d96;">NOISE</span><span class="t" style="left:851.9px;top:265.38px;font-size:8.6px;color:#f4f4f4;transform:translateX(-50%) scaleX(0.879);transform-origin:50% 50%;font-weight:700;">On</span><span class="t" style="left:927.5px;top:265.39px;font-size:9.2px;color:#f2f2f2;transform:translateX(-50%) scaleX(0.919);transform-origin:50% 50%;font-weight:700;">White</span><span class="t" style="left:886.8px;top:319.22px;font-size:7.6px;color:#f2f2f2;transform:translateX(-50%) scaleX(1.000);transform-origin:50% 50%;font-weight:700;">Vol</span><span class="t" style="left:933.5px;top:319.22px;font-size:7.6px;color:#f2f2f2;transform:translateX(-50%) scaleX(1.000);transform-origin:50% 50%;font-weight:700;">Low Cut</span><span class="t" style="left:980.3px;top:319.22px;font-size:7.6px;color:#f2f2f2;transform:translateX(-50%) scaleX(1.000);transform-origin:50% 50%;font-weight:700;">High Cut</span><span class="t" style="left:206.3px;top:348.59px;font-size:9.2px;color:#868d96;transform:scaleX(0.968);transform-origin:0 50%;-webkit-text-stroke:0.2px #868d96;">MODULATION</span><span class="t" style="left:213.8px;top:378.33px;font-size:6.8px;color:#59616c;transform:scaleX(1.138);transform-origin:0 50%;-webkit-text-stroke:0.2px #59616c;">Target</span><span class="t" style="left:311.0px;top:375.89px;font-size:9.2px;color:#f2f2f2;transform:translateX(-50%) scaleX(0.934);transform-origin:50% 50%;font-weight:700;">Master Vol</span><span class="t" style="left:403.2px;top:378.62px;font-size:7.6px;color:#f2f2f2;transform:translateX(-50%) scaleX(1.000);transform-origin:50% 50%;font-weight:700;">Smooth</span><span class="t" style="left:220.0px;top:403.98px;font-size:8.6px;color:#f4f4f4;transform:translateX(-50%) scaleX(0.879);transform-origin:50% 50%;font-weight:700;">On</span><span class="t" style="left:273.5px;top:403.89px;font-size:9.2px;color:#f2f2f2;transform:translateX(-50%) scaleX(0.899);transform-origin:50% 50%;font-weight:700;">AHDSR1</span><span class="t" style="left:340.6px;top:403.92px;font-size:9px;color:#f2f2f2;transform:translateX(-50%) scaleX(0.933);transform-origin:50% 50%;font-weight:700;">E</span><span class="t" style="left:360.6px;top:403.72px;font-size:9px;color:#f2f2f2;transform:translateX(-50%) scaleX(1.000);transform-origin:50% 50%;font-weight:700;">-</span><span class="t" style="left:406.2px;top:407.42px;font-size:7.6px;color:#f2f2f2;transform:translateX(-50%) scaleX(1.000);transform-origin:50% 50%;font-weight:700;">Depth</span><span class="t" style="left:220.0px;top:435.18px;font-size:8.6px;color:#f4f4f4;transform:translateX(-50%) scaleX(0.879);transform-origin:50% 50%;font-weight:700;">On</span><span class="t" style="left:273.5px;top:435.09px;font-size:9.2px;color:#f2f2f2;transform:translateX(-50%) scaleX(0.935);transform-origin:50% 50%;font-weight:700;">Velocity</span><span class="t" style="left:340.6px;top:435.12px;font-size:9px;color:#f2f2f2;transform:translateX(-50%) scaleX(0.933);transform-origin:50% 50%;font-weight:700;">E</span><span class="t" style="left:360.6px;top:434.92px;font-size:9px;color:#f2f2f2;transform:translateX(-50%) scaleX(1.000);transform-origin:50% 50%;font-weight:700;">-</span><span class="t" style="left:406.2px;top:438.62px;font-size:7.6px;color:#f2f2f2;transform:translateX(-50%) scaleX(1.000);transform-origin:50% 50%;font-weight:700;">Depth</span><span class="t" style="left:220.0px;top:466.18px;font-size:8.6px;color:#f4f4f4;transform:translateX(-50%) scaleX(0.879);transform-origin:50% 50%;font-weight:700;">On</span><span class="t" style="left:340.6px;top:466.12px;font-size:9px;color:#f2f2f2;transform:translateX(-50%) scaleX(0.933);transform-origin:50% 50%;font-weight:700;">E</span><span class="t" style="left:360.6px;top:465.92px;font-size:9px;color:#f2f2f2;transform:translateX(-50%) scaleX(1.000);transform-origin:50% 50%;font-weight:700;">-</span><span class="t" style="left:406.2px;top:469.62px;font-size:7.6px;color:#f2f2f2;transform:translateX(-50%) scaleX(1.000);transform-origin:50% 50%;font-weight:700;">Depth</span><span class="t" style="left:500.7px;top:344.81px;font-size:8.4px;color:#f2f2f2;transform:translateX(-50%) scaleX(0.863);transform-origin:50% 50%;font-weight:700;">LFO</span><span class="t" style="left:564.5px;top:344.81px;font-size:8.4px;color:#e8892b;transform:translateX(-50%) scaleX(0.854);transform-origin:50% 50%;font-weight:700;">AHDSR</span><span class="t" style="left:626.8px;top:344.81px;font-size:8.4px;color:#f2f2f2;transform:translateX(-50%) scaleX(0.910);transform-origin:50% 50%;font-weight:700;">MSEG</span><span class="t" style="left:688.9px;top:344.81px;font-size:8.4px;color:#f2f2f2;transform:translateX(-50%) scaleX(0.911);transform-origin:50% 50%;font-weight:700;">SEQUENCER</span><span class="t" style="left:752.4px;top:344.81px;font-size:8.4px;color:#f2f2f2;transform:translateX(-50%) scaleX(0.928);transform-origin:50% 50%;font-weight:700;">MODMAP</span><span class="t" style="left:496.7px;top:375.52px;font-size:9px;color:#f2f2f2;transform:translateX(-50%) scaleX(1.000);transform-origin:50% 50%;font-weight:700;">1</span><span class="t" style="left:561.2px;top:375.49px;font-size:9.2px;color:#f2f2f2;transform:translateX(-50%) scaleX(1.010);transform-origin:50% 50%;font-weight:700;">File</span><span class="t" style="left:483.0px;top:390.66px;font-size:6.6px;color:#59616c;transform:scaleX(1.090);transform-origin:0 50%;-webkit-text-stroke:0.2px #59616c;">Current</span><span class="t" style="left:503.2px;top:404.69px;font-size:9.2px;color:#f2f2f2;transform:translateX(-50%) scaleX(0.978);transform-origin:50% 50%;font-weight:700;">Trigger</span><span class="t" style="left:561.2px;top:404.69px;font-size:9.2px;color:#f2f2f2;transform:translateX(-50%) scaleX(0.909);transform-origin:50% 50%;font-weight:700;">Sync</span><span class="t" style="left:1044.8px;top:349.29px;font-size:9.2px;color:#f2f2f2;transform:translateX(-50%) scaleX(0.923);transform-origin:50% 50%;font-weight:700;">Show Target</span><span class="t" style="left:612.4px;top:374.75px;font-size:8.8px;color:#f2f2f2;transform:translateX(-50%) scaleX(1.000);transform-origin:50% 50%;font-weight:700;">0</span><span class="t" style="left:622.5px;top:506.82px;font-size:7.6px;color:#f2f2f2;transform:translateX(-50%) scaleX(1.000);transform-origin:50% 50%;font-weight:700;">Attack</span><span class="t" style="left:661.5px;top:506.82px;font-size:7.6px;color:#f2f2f2;transform:translateX(-50%) scaleX(1.000);transform-origin:50% 50%;font-weight:700;">Hold</span><span class="t" style="left:700.4px;top:506.82px;font-size:7.6px;color:#f2f2f2;transform:translateX(-50%) scaleX(1.000);transform-origin:50% 50%;font-weight:700;">Decay</span><span class="t" style="left:739.4px;top:506.82px;font-size:7.6px;color:#f2f2f2;transform:translateX(-50%) scaleX(1.000);transform-origin:50% 50%;font-weight:700;">Sustain</span><span class="t" style="left:778.2px;top:506.82px;font-size:7.6px;color:#f2f2f2;transform:translateX(-50%) scaleX(1.000);transform-origin:50% 50%;font-weight:700;">Release</span><span class="t" style="left:199.0px;top:532.68px;font-size:8.6px;color:#666;transform:scaleX(0.979);transform-origin:0 50%;font-weight:700;">PERFORM</span><span class="t" style="left:199.0px;top:563.08px;font-size:8.6px;color:#f4f4f4;transform:scaleX(0.991);transform-origin:0 50%;font-weight:700;">ARP</span><span class="t" style="left:199.0px;top:593.48px;font-size:8.6px;color:#f4f4f4;transform:scaleX(0.957);transform-origin:0 50%;font-weight:700;">EFFECTS</span><span class="t" style="left:302.0px;top:559.89px;font-size:9.2px;color:#f2f2f2;transform:translateX(-50%) scaleX(0.904);transform-origin:50% 50%;font-weight:700;">Hoover Echo</span><span class="t" style="left:384.2px;top:559.89px;font-size:9.2px;color:#f2f2f2;transform:translateX(-50%) scaleX(0.943);transform-origin:50% 50%;font-weight:700;">Fast Drop</span><span class="t" style="left:466.0px;top:559.89px;font-size:9.2px;color:#f2f2f2;transform:translateX(-50%) scaleX(0.964);transform-origin:50% 50%;font-weight:700;">Vocal</span><span class="t" style="left:547.9px;top:559.89px;font-size:9.2px;color:#f2f2f2;transform:translateX(-50%) scaleX(0.911);transform-origin:50% 50%;font-weight:700;">Big</span><span class="t" style="left:302.0px;top:617.69px;font-size:9.2px;color:#f2f2f2;transform:translateX(-50%) scaleX(0.956);transform-origin:50% 50%;font-weight:700;">Slow Drop</span><span class="t" style="left:384.2px;top:617.69px;font-size:9.2px;color:#f2f2f2;transform:translateX(-50%) scaleX(0.901);transform-origin:50% 50%;font-weight:700;">Thin</span><span class="t" style="left:466.0px;top:617.69px;font-size:9.2px;color:#f2f2f2;transform:translateX(-50%) scaleX(0.875);transform-origin:50% 50%;font-weight:700;">Thinner</span><span class="t" style="left:547.9px;top:617.69px;font-size:9.2px;color:#f2f2f2;transform:translateX(-50%) scaleX(0.926);transform-origin:50% 50%;font-weight:700;">Sweep</span><span class="t" style="left:334.9px;top:661.02px;font-size:9px;color:#f6f6f6;transform:translateX(-50%) scaleX(0.885);transform-origin:50% 50%;font-weight:700;">Off</span><span class="t" style="left:401.1px;top:661.02px;font-size:9px;color:#f6f6f6;transform:translateX(-50%) scaleX(0.885);transform-origin:50% 50%;font-weight:700;">Off</span><span class="t" style="left:479.2px;top:661.02px;font-size:9px;color:#f6f6f6;transform:translateX(-50%) scaleX(0.946);transform-origin:50% 50%;font-weight:700;">Control2</span><span class="t" style="left:558.2px;top:661.02px;font-size:9px;color:#f6f6f6;transform:translateX(-50%) scaleX(0.943);transform-origin:50% 50%;font-weight:700;">-20.7 dB</span><span class="t" style="left:318.0px;top:676.13px;font-size:6.8px;color:#6e6e6e;transform:scaleX(1.014);transform-origin:0 50%;font-weight:700;">Octave</span><span class="t" style="left:380.0px;top:676.13px;font-size:6.8px;color:#6e6e6e;transform:scaleX(0.950);transform-origin:0 50%;font-weight:700;">Rate</span><span class="t" style="left:450.0px;top:676.13px;font-size:6.8px;color:#6e6e6e;transform:scaleX(0.999);transform-origin:0 50%;font-weight:700;">Wheel</span><span class="t" style="left:536.0px;top:676.13px;font-size:6.8px;color:#6e6e6e;transform:scaleX(1.014);transform-origin:0 50%;font-weight:700;">Snap Vol</span><span class="t" style="left:625.6px;top:582.92px;font-size:7.6px;color:#161616;transform:translateX(-50%) scaleX(1.000);transform-origin:50% 50%;font-weight:700;">Delay</span><span class="t" style="left:676.2px;top:582.92px;font-size:7.6px;color:#161616;transform:translateX(-50%) scaleX(1.000);transform-origin:50% 50%;font-weight:700;">Cutoff</span><span class="t" style="left:727.0px;top:582.92px;font-size:7.6px;color:#161616;transform:translateX(-50%) scaleX(1.000);transform-origin:50% 50%;font-weight:700;">Attack 2</span><span class="t" style="left:777.6px;top:582.92px;font-size:7.6px;color:#161616;transform:translateX(-50%) scaleX(1.000);transform-origin:50% 50%;font-weight:700;">Unison</span><span class="t" style="left:625.6px;top:650.82px;font-size:7.6px;color:#161616;transform:translateX(-50%) scaleX(1.000);transform-origin:50% 50%;font-weight:700;">Reverb</span><span class="t" style="left:676.2px;top:650.82px;font-size:7.6px;color:#161616;transform:translateX(-50%) scaleX(1.000);transform-origin:50% 50%;font-weight:700;">Resonance</span><span class="t" style="left:727.0px;top:650.82px;font-size:7.6px;color:#161616;transform:translateX(-50%) scaleX(1.000);transform-origin:50% 50%;font-weight:700;">Decay 2</span><span class="t" style="left:777.6px;top:650.82px;font-size:7.6px;color:#161616;transform:translateX(-50%) scaleX(1.000);transform-origin:50% 50%;font-weight:700;">Noise</span><span class="t" style="left:810.2px;top:545.56px;font-size:8px;color:#161616;transform:scaleX(0.966);transform-origin:0 50%;font-weight:700;">X1: BP Mix</span><span class="t" style="left:907.0px;top:545.56px;font-size:8px;color:#161616;transform:scaleX(0.958);transform-origin:0 50%;font-weight:700;">X2: Delay Time L</span><span class="t" style="left:898.5px;top:656.16px;font-size:8px;color:#161616;transform:translateX(-100%) scaleX(0.970);transform-origin:100% 50%;font-weight:700;">Y1: BP Pitch</span><span class="t" style="left:995.0px;top:656.16px;font-size:8px;color:#161616;transform:translateX(-100%) scaleX(0.953);transform-origin:100% 50%;font-weight:700;">Y2: HP Cutoff</span><span class="t" style="left:1023.3px;top:582.82px;font-size:7.6px;color:#161616;transform:translateX(-50%) scaleX(1.000);transform-origin:50% 50%;font-weight:700;">Attack</span><span class="t" style="left:1062.2px;top:582.82px;font-size:7.6px;color:#161616;transform:translateX(-50%) scaleX(1.000);transform-origin:50% 50%;font-weight:700;">Decay</span><span class="t" style="left:1023.1px;top:650.62px;font-size:7.6px;color:#161616;transform:translateX(-50%) scaleX(1.000);transform-origin:50% 50%;font-weight:700;">Sustain</span><span class="t" style="left:1062.3px;top:650.62px;font-size:7.6px;color:#161616;transform:translateX(-50%) scaleX(1.000);transform-origin:50% 50%;font-weight:700;">Release</span></div>
</div></body></html>
